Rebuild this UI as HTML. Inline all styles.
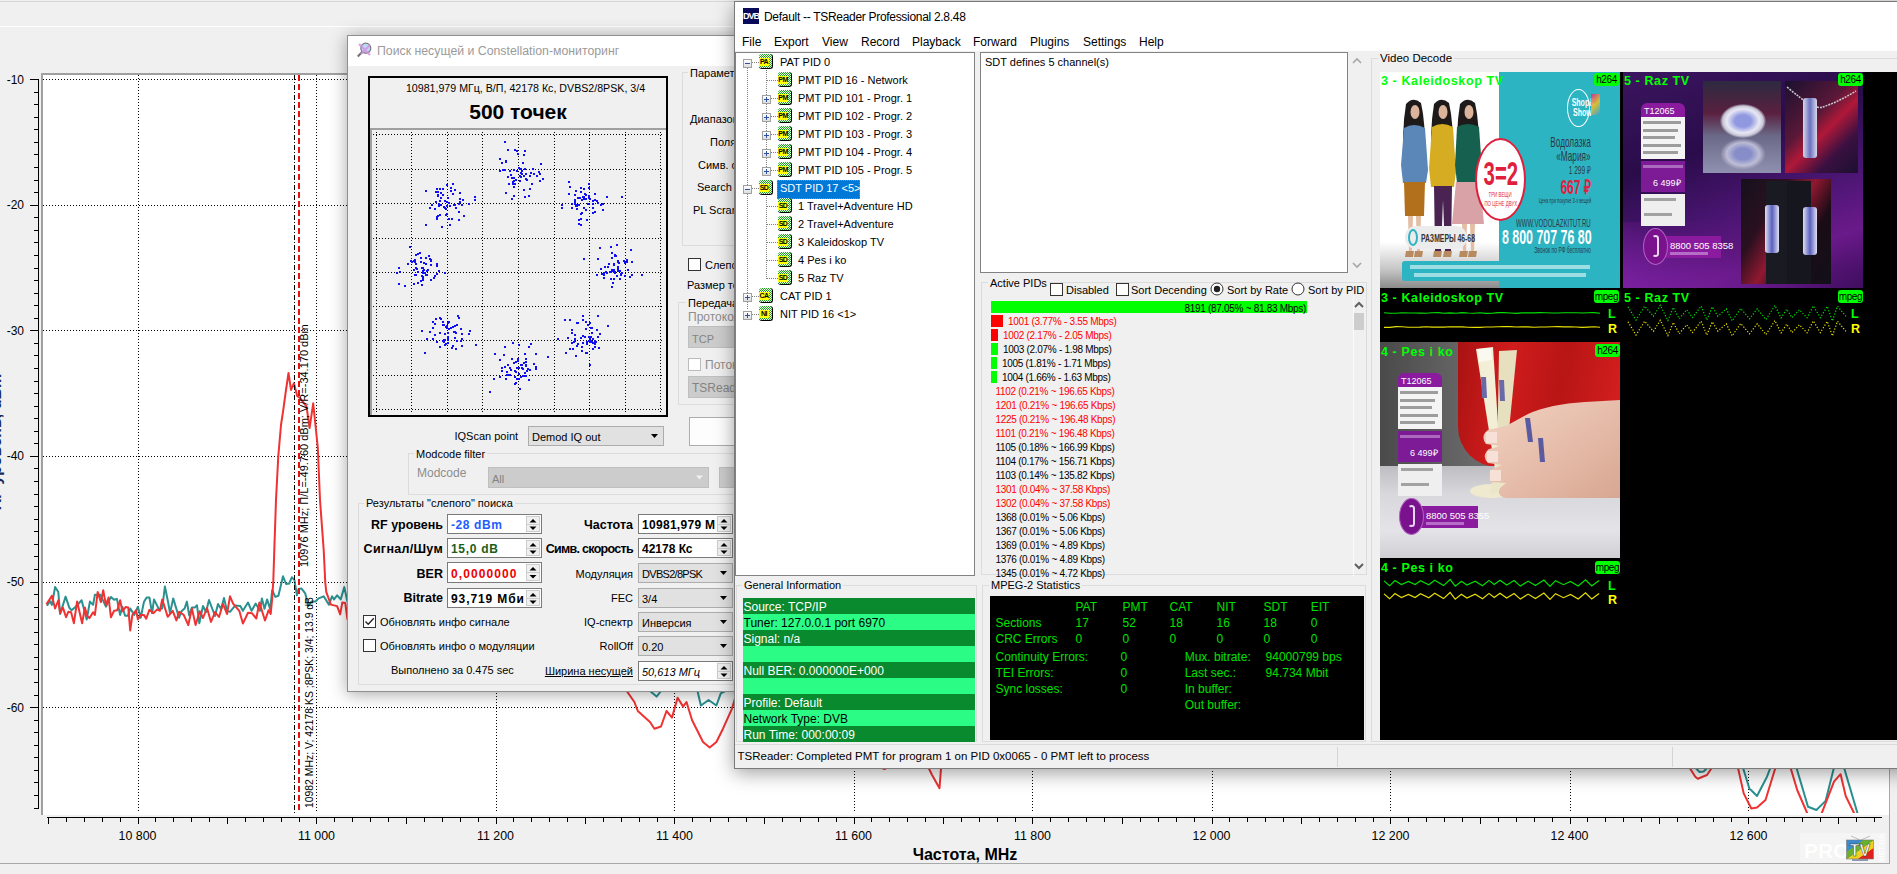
<!DOCTYPE html>
<html><head><meta charset="utf-8">
<style>
*{box-sizing:border-box}
html,body{margin:0;padding:0}
body{width:1897px;height:874px;overflow:hidden;position:relative;background:#f0f0f0;font-family:"Liberation Sans",sans-serif;font-size:12px;color:#000}
.a{position:absolute}

</style></head><body>
<svg width="1897" height="874" style="position:absolute;left:0;top:0">
<rect x="0" y="1" width="1897" height="1" fill="#d6d6d6"/>
<rect x="0" y="26" width="1897" height="1" fill="#ffffff"/>
<rect x="0" y="863" width="1890" height="1" fill="#a9a9a9"/>
<rect x="1889" y="26" width="1" height="838" fill="#a9a9a9"/>
<rect x="41" y="73" width="1848" height="742" fill="#ffffff"/>
<rect x="41" y="73" width="1848" height="2" fill="#a0a0a0"/>
<rect x="41" y="73" width="2" height="742" fill="#a0a0a0"/>
<line x1="43" y1="79.5" x2="1888" y2="79.5" stroke="#000" stroke-width="1" stroke-dasharray="1,2"/>
<line x1="43" y1="205.5" x2="1888" y2="205.5" stroke="#000" stroke-width="1" stroke-dasharray="1,2"/>
<line x1="43" y1="330.5" x2="1888" y2="330.5" stroke="#000" stroke-width="1" stroke-dasharray="1,2"/>
<line x1="43" y1="456.5" x2="1888" y2="456.5" stroke="#000" stroke-width="1" stroke-dasharray="1,2"/>
<line x1="43" y1="582.5" x2="1888" y2="582.5" stroke="#000" stroke-width="1" stroke-dasharray="1,2"/>
<line x1="43" y1="707.5" x2="1888" y2="707.5" stroke="#000" stroke-width="1" stroke-dasharray="1,2"/>
<line x1="138.5" y1="75" x2="138.5" y2="813" stroke="#000" stroke-width="1" stroke-dasharray="1,2"/>
<line x1="316.5" y1="75" x2="316.5" y2="813" stroke="#000" stroke-width="1" stroke-dasharray="1,2"/>
<line x1="496.5" y1="75" x2="496.5" y2="813" stroke="#000" stroke-width="1" stroke-dasharray="1,2"/>
<line x1="674.5" y1="75" x2="674.5" y2="813" stroke="#000" stroke-width="1" stroke-dasharray="1,2"/>
<line x1="854.5" y1="75" x2="854.5" y2="813" stroke="#000" stroke-width="1" stroke-dasharray="1,2"/>
<line x1="1032.5" y1="75" x2="1032.5" y2="813" stroke="#000" stroke-width="1" stroke-dasharray="1,2"/>
<line x1="1212.5" y1="75" x2="1212.5" y2="813" stroke="#000" stroke-width="1" stroke-dasharray="1,2"/>
<line x1="1390.5" y1="75" x2="1390.5" y2="813" stroke="#000" stroke-width="1" stroke-dasharray="1,2"/>
<line x1="1570.5" y1="75" x2="1570.5" y2="813" stroke="#000" stroke-width="1" stroke-dasharray="1,2"/>
<line x1="1748.5" y1="75" x2="1748.5" y2="813" stroke="#000" stroke-width="1" stroke-dasharray="1,2"/>
<rect x="38" y="79" width="1" height="730" fill="#000"/>
<rect x="30" y="79" width="8" height="1" fill="#000"/>
<rect x="34" y="92" width="4" height="1" fill="#000"/>
<rect x="34" y="104" width="4" height="1" fill="#000"/>
<rect x="34" y="117" width="4" height="1" fill="#000"/>
<rect x="34" y="129" width="4" height="1" fill="#000"/>
<rect x="34" y="142" width="4" height="1" fill="#000"/>
<rect x="34" y="154" width="4" height="1" fill="#000"/>
<rect x="34" y="167" width="4" height="1" fill="#000"/>
<rect x="34" y="180" width="4" height="1" fill="#000"/>
<rect x="34" y="192" width="4" height="1" fill="#000"/>
<rect x="30" y="205" width="8" height="1" fill="#000"/>
<rect x="34" y="217" width="4" height="1" fill="#000"/>
<rect x="34" y="230" width="4" height="1" fill="#000"/>
<rect x="34" y="242" width="4" height="1" fill="#000"/>
<rect x="34" y="255" width="4" height="1" fill="#000"/>
<rect x="34" y="268" width="4" height="1" fill="#000"/>
<rect x="34" y="280" width="4" height="1" fill="#000"/>
<rect x="34" y="293" width="4" height="1" fill="#000"/>
<rect x="34" y="305" width="4" height="1" fill="#000"/>
<rect x="34" y="318" width="4" height="1" fill="#000"/>
<rect x="30" y="330" width="8" height="1" fill="#000"/>
<rect x="34" y="343" width="4" height="1" fill="#000"/>
<rect x="34" y="355" width="4" height="1" fill="#000"/>
<rect x="34" y="368" width="4" height="1" fill="#000"/>
<rect x="34" y="381" width="4" height="1" fill="#000"/>
<rect x="34" y="393" width="4" height="1" fill="#000"/>
<rect x="34" y="406" width="4" height="1" fill="#000"/>
<rect x="34" y="418" width="4" height="1" fill="#000"/>
<rect x="34" y="431" width="4" height="1" fill="#000"/>
<rect x="34" y="443" width="4" height="1" fill="#000"/>
<rect x="30" y="456" width="8" height="1" fill="#000"/>
<rect x="34" y="468" width="4" height="1" fill="#000"/>
<rect x="34" y="481" width="4" height="1" fill="#000"/>
<rect x="34" y="494" width="4" height="1" fill="#000"/>
<rect x="34" y="506" width="4" height="1" fill="#000"/>
<rect x="34" y="519" width="4" height="1" fill="#000"/>
<rect x="34" y="531" width="4" height="1" fill="#000"/>
<rect x="34" y="544" width="4" height="1" fill="#000"/>
<rect x="34" y="556" width="4" height="1" fill="#000"/>
<rect x="34" y="569" width="4" height="1" fill="#000"/>
<rect x="30" y="582" width="8" height="1" fill="#000"/>
<rect x="34" y="594" width="4" height="1" fill="#000"/>
<rect x="34" y="607" width="4" height="1" fill="#000"/>
<rect x="34" y="619" width="4" height="1" fill="#000"/>
<rect x="34" y="632" width="4" height="1" fill="#000"/>
<rect x="34" y="644" width="4" height="1" fill="#000"/>
<rect x="34" y="657" width="4" height="1" fill="#000"/>
<rect x="34" y="669" width="4" height="1" fill="#000"/>
<rect x="34" y="682" width="4" height="1" fill="#000"/>
<rect x="34" y="695" width="4" height="1" fill="#000"/>
<rect x="30" y="707" width="8" height="1" fill="#000"/>
<rect x="34" y="720" width="4" height="1" fill="#000"/>
<rect x="34" y="732" width="4" height="1" fill="#000"/>
<rect x="34" y="745" width="4" height="1" fill="#000"/>
<rect x="34" y="757" width="4" height="1" fill="#000"/>
<rect x="34" y="770" width="4" height="1" fill="#000"/>
<rect x="34" y="782" width="4" height="1" fill="#000"/>
<rect x="34" y="795" width="4" height="1" fill="#000"/>
<rect x="34" y="808" width="4" height="1" fill="#000"/>
<text x="24" y="83.6" text-anchor="end" font-family="Liberation Sans" font-size="12" fill="#000">-10</text>
<text x="24" y="209.2" text-anchor="end" font-family="Liberation Sans" font-size="12" fill="#000">-20</text>
<text x="24" y="334.8" text-anchor="end" font-family="Liberation Sans" font-size="12" fill="#000">-30</text>
<text x="24" y="460.4" text-anchor="end" font-family="Liberation Sans" font-size="12" fill="#000">-40</text>
<text x="24" y="586.0" text-anchor="end" font-family="Liberation Sans" font-size="12" fill="#000">-50</text>
<text x="24" y="711.6" text-anchor="end" font-family="Liberation Sans" font-size="12" fill="#000">-60</text>
<rect x="47" y="817" width="1835" height="1" fill="#000"/>
<rect x="48" y="817" width="1" height="7" fill="#000"/>
<rect x="66" y="817" width="1" height="5" fill="#000"/>
<rect x="84" y="817" width="1" height="5" fill="#000"/>
<rect x="102" y="817" width="1" height="5" fill="#000"/>
<rect x="120" y="817" width="1" height="5" fill="#000"/>
<rect x="138" y="817" width="1" height="7" fill="#000"/>
<rect x="155" y="817" width="1" height="5" fill="#000"/>
<rect x="173" y="817" width="1" height="5" fill="#000"/>
<rect x="191" y="817" width="1" height="5" fill="#000"/>
<rect x="209" y="817" width="1" height="5" fill="#000"/>
<rect x="227" y="817" width="1" height="7" fill="#000"/>
<rect x="245" y="817" width="1" height="5" fill="#000"/>
<rect x="263" y="817" width="1" height="5" fill="#000"/>
<rect x="281" y="817" width="1" height="5" fill="#000"/>
<rect x="299" y="817" width="1" height="5" fill="#000"/>
<rect x="316" y="817" width="1" height="7" fill="#000"/>
<rect x="334" y="817" width="1" height="5" fill="#000"/>
<rect x="352" y="817" width="1" height="5" fill="#000"/>
<rect x="370" y="817" width="1" height="5" fill="#000"/>
<rect x="388" y="817" width="1" height="5" fill="#000"/>
<rect x="406" y="817" width="1" height="7" fill="#000"/>
<rect x="424" y="817" width="1" height="5" fill="#000"/>
<rect x="442" y="817" width="1" height="5" fill="#000"/>
<rect x="460" y="817" width="1" height="5" fill="#000"/>
<rect x="478" y="817" width="1" height="5" fill="#000"/>
<rect x="496" y="817" width="1" height="7" fill="#000"/>
<rect x="513" y="817" width="1" height="5" fill="#000"/>
<rect x="531" y="817" width="1" height="5" fill="#000"/>
<rect x="549" y="817" width="1" height="5" fill="#000"/>
<rect x="567" y="817" width="1" height="5" fill="#000"/>
<rect x="585" y="817" width="1" height="7" fill="#000"/>
<rect x="603" y="817" width="1" height="5" fill="#000"/>
<rect x="621" y="817" width="1" height="5" fill="#000"/>
<rect x="639" y="817" width="1" height="5" fill="#000"/>
<rect x="657" y="817" width="1" height="5" fill="#000"/>
<rect x="674" y="817" width="1" height="7" fill="#000"/>
<rect x="692" y="817" width="1" height="5" fill="#000"/>
<rect x="710" y="817" width="1" height="5" fill="#000"/>
<rect x="728" y="817" width="1" height="5" fill="#000"/>
<rect x="746" y="817" width="1" height="5" fill="#000"/>
<rect x="764" y="817" width="1" height="7" fill="#000"/>
<rect x="782" y="817" width="1" height="5" fill="#000"/>
<rect x="800" y="817" width="1" height="5" fill="#000"/>
<rect x="818" y="817" width="1" height="5" fill="#000"/>
<rect x="836" y="817" width="1" height="5" fill="#000"/>
<rect x="854" y="817" width="1" height="7" fill="#000"/>
<rect x="871" y="817" width="1" height="5" fill="#000"/>
<rect x="889" y="817" width="1" height="5" fill="#000"/>
<rect x="907" y="817" width="1" height="5" fill="#000"/>
<rect x="925" y="817" width="1" height="5" fill="#000"/>
<rect x="943" y="817" width="1" height="7" fill="#000"/>
<rect x="961" y="817" width="1" height="5" fill="#000"/>
<rect x="979" y="817" width="1" height="5" fill="#000"/>
<rect x="997" y="817" width="1" height="5" fill="#000"/>
<rect x="1015" y="817" width="1" height="5" fill="#000"/>
<rect x="1032" y="817" width="1" height="7" fill="#000"/>
<rect x="1050" y="817" width="1" height="5" fill="#000"/>
<rect x="1068" y="817" width="1" height="5" fill="#000"/>
<rect x="1086" y="817" width="1" height="5" fill="#000"/>
<rect x="1104" y="817" width="1" height="5" fill="#000"/>
<rect x="1122" y="817" width="1" height="7" fill="#000"/>
<rect x="1140" y="817" width="1" height="5" fill="#000"/>
<rect x="1158" y="817" width="1" height="5" fill="#000"/>
<rect x="1176" y="817" width="1" height="5" fill="#000"/>
<rect x="1194" y="817" width="1" height="5" fill="#000"/>
<rect x="1212" y="817" width="1" height="7" fill="#000"/>
<rect x="1229" y="817" width="1" height="5" fill="#000"/>
<rect x="1247" y="817" width="1" height="5" fill="#000"/>
<rect x="1265" y="817" width="1" height="5" fill="#000"/>
<rect x="1283" y="817" width="1" height="5" fill="#000"/>
<rect x="1301" y="817" width="1" height="7" fill="#000"/>
<rect x="1319" y="817" width="1" height="5" fill="#000"/>
<rect x="1337" y="817" width="1" height="5" fill="#000"/>
<rect x="1355" y="817" width="1" height="5" fill="#000"/>
<rect x="1373" y="817" width="1" height="5" fill="#000"/>
<rect x="1390" y="817" width="1" height="7" fill="#000"/>
<rect x="1408" y="817" width="1" height="5" fill="#000"/>
<rect x="1426" y="817" width="1" height="5" fill="#000"/>
<rect x="1444" y="817" width="1" height="5" fill="#000"/>
<rect x="1462" y="817" width="1" height="5" fill="#000"/>
<rect x="1480" y="817" width="1" height="7" fill="#000"/>
<rect x="1498" y="817" width="1" height="5" fill="#000"/>
<rect x="1516" y="817" width="1" height="5" fill="#000"/>
<rect x="1534" y="817" width="1" height="5" fill="#000"/>
<rect x="1552" y="817" width="1" height="5" fill="#000"/>
<rect x="1570" y="817" width="1" height="7" fill="#000"/>
<rect x="1587" y="817" width="1" height="5" fill="#000"/>
<rect x="1605" y="817" width="1" height="5" fill="#000"/>
<rect x="1623" y="817" width="1" height="5" fill="#000"/>
<rect x="1641" y="817" width="1" height="5" fill="#000"/>
<rect x="1659" y="817" width="1" height="7" fill="#000"/>
<rect x="1677" y="817" width="1" height="5" fill="#000"/>
<rect x="1695" y="817" width="1" height="5" fill="#000"/>
<rect x="1713" y="817" width="1" height="5" fill="#000"/>
<rect x="1731" y="817" width="1" height="5" fill="#000"/>
<rect x="1748" y="817" width="1" height="7" fill="#000"/>
<rect x="1766" y="817" width="1" height="5" fill="#000"/>
<rect x="1784" y="817" width="1" height="5" fill="#000"/>
<rect x="1802" y="817" width="1" height="5" fill="#000"/>
<rect x="1820" y="817" width="1" height="5" fill="#000"/>
<rect x="1838" y="817" width="1" height="7" fill="#000"/>
<rect x="1856" y="817" width="1" height="5" fill="#000"/>
<rect x="1874" y="817" width="1" height="5" fill="#000"/>
<text x="137.5" y="840" text-anchor="middle" font-family="Liberation Sans" font-size="12.4" fill="#000">10 800</text>
<text x="316.5" y="840" text-anchor="middle" font-family="Liberation Sans" font-size="12.4" fill="#000">11 000</text>
<text x="495.5" y="840" text-anchor="middle" font-family="Liberation Sans" font-size="12.4" fill="#000">11 200</text>
<text x="674.5" y="840" text-anchor="middle" font-family="Liberation Sans" font-size="12.4" fill="#000">11 400</text>
<text x="853.5" y="840" text-anchor="middle" font-family="Liberation Sans" font-size="12.4" fill="#000">11 600</text>
<text x="1032.5" y="840" text-anchor="middle" font-family="Liberation Sans" font-size="12.4" fill="#000">11 800</text>
<text x="1211.5" y="840" text-anchor="middle" font-family="Liberation Sans" font-size="12.4" fill="#000">12 000</text>
<text x="1390.5" y="840" text-anchor="middle" font-family="Liberation Sans" font-size="12.4" fill="#000">12 200</text>
<text x="1569.5" y="840" text-anchor="middle" font-family="Liberation Sans" font-size="12.4" fill="#000">12 400</text>
<text x="1748.5" y="840" text-anchor="middle" font-family="Liberation Sans" font-size="12.4" fill="#000">12 600</text>
<text x="965" y="860" text-anchor="middle" font-family="Liberation Sans" font-weight="bold" font-size="16" fill="#000">Частота, MHz</text>
<text transform="translate(1,442) rotate(-90)" text-anchor="middle" font-family="Liberation Sans" font-weight="bold" font-size="16" fill="#1a2a5a">RF уровень, dBm</text>
<g clip-path="url(#pc)">
<clipPath id="pc"><rect x="43" y="75" width="1845" height="738"/></clipPath>
<polyline points="46.9,605.8 50.0,601.2 51.9,604.9 55.1,587.0 58.3,592.0 60.1,614.0 65.6,596.6 69.3,607.6 71.6,610.3 75.7,606.7 81.6,600.3 86.7,619.5 89.9,601.6 93.1,604.9 94.9,594.8 100.4,594.8 105.9,606.7 110.9,597.0 114.1,599.8 116.9,598.9 120.1,614.9 122.4,606.7 125.1,615.8 127.9,615.8 130.2,608.5 134.3,614.9 137.9,606.7 140.7,617.7 143.9,602.1 146.6,597.5 149.4,597.5 152.1,613.1 154.0,599.4 159.0,609.4 162.2,608.5 164.9,586.5 168.1,602.1 170.0,613.1 173.2,598.4 179.1,617.7 181.4,611.3 184.6,608.5 186.9,601.6 189.2,615.4 191.9,607.6 194.7,607.6 197.0,605.3 199.3,623.2 203.0,606.0 206.0,612.0 209.0,600.0 212.0,608.0 215.0,616.0 218.0,604.0 221.0,609.0 224.0,598.0 227.0,611.0 230.0,611.8 235.1,605.6 240.3,606.0 242.9,610.8 248.0,602.5 251.6,610.8 255.7,603.6 259.9,610.8 261.9,598.4 264.5,608.7 267.1,599.4 270.2,609.2 272.2,590.2 275.3,596.9 278.4,595.8 283.0,576.3 286.1,584.0 289.2,583.5 291.8,577.3 294.4,579.9 296.9,595.3 298.5,589.1 301.6,588.6 305.2,593.3 308.3,606.1 311.4,601.5 315.5,601.5 318.6,598.4 323.7,596.3 328.9,604.6 332.0,596.3 334.0,599.4 337.1,595.3 340.7,599.4 344.3,587.1 347.4,601.5 352.0,598.0" fill="none" stroke="#2a9090" stroke-width="2" stroke-linejoin="round"/>
<polyline points="46.4,604.4 51.9,595.7 55.1,608.5 58.3,600.3 60.1,613.1 62.9,607.6 66.1,617.2 68.4,611.7 71.1,612.2 73.9,623.2 77.1,601.6 82.1,623.2 84.9,607.6 87.1,615.8 89.4,618.1 93.1,612.2 94.9,614.9 97.7,592.0 100.9,602.1 103.2,590.2 105.9,604.9 108.6,597.5 110.9,617.2 114.1,610.8 117.3,610.3 120.1,600.3 122.4,611.3 125.6,607.1 128.3,607.6 130.2,630.5 132.4,614.9 136.1,610.3 137.9,619.5 140.7,614.9 143.9,614.9 146.2,618.6 149.4,609.9 153.5,613.1 157.2,609.4 159.9,610.8 162.2,599.4 167.7,616.8 172.7,610.8 176.4,620.4 179.1,611.7 183.7,614.9 188.3,625.0 191.9,608.5 195.6,625.0 199.7,611.3 203.0,618.0 207.0,608.0 211.0,622.0 215.0,612.0 219.0,617.0 223.0,604.0 227.0,614.0 230.0,596.3 233.1,603.6 239.3,610.8 242.9,623.6 248.0,612.8 252.1,613.3 256.3,618.5 259.4,602.5 265.0,620.5 268.6,610.2 270.7,613.9 272.2,598.4 273.3,580.9 274.3,550.0 276.0,500.0 278.3,456.0 281.0,425.0 283.3,409.7 286.0,390.0 288.5,373.0 291.0,389.9 293.9,383.2 297.2,396.0 300.0,398.0 303.0,402.0 306.5,406.3 309.6,428.0 313.2,403.3 317.8,447.5 320.0,500.0 323.7,550.0 325.3,583.0 326.3,592.2 330.9,604.6 337.1,606.1 340.2,614.4 342.3,602.5 345.3,603.0 347.4,619.0 352.0,612.0" fill="none" stroke="#f03232" stroke-width="2" stroke-linejoin="round"/>
<polyline points="640.0,670.0 650.0,691.0 656.6,696.6 661.0,691.0 668.0,675.0 690.0,675.0 697.5,691.0 700.9,705.5 708.6,700.0 716.4,705.5 720.8,693.3 725.2,691.0 735.0,675.0" fill="none" stroke="#2a9090" stroke-width="2" stroke-linejoin="round"/>
<polyline points="615.0,670.0 626.7,691.0 634.4,702.0 637.8,711.0 650.0,722.0 654.4,728.7 661.0,726.5 666.5,711.0 672.0,717.6 677.6,697.7 683.1,706.6 686.5,702.0 692.0,720.0 703.0,742.0 709.7,747.5 716.4,742.0 723.0,728.7 731.9,708.8 736.0,695.0 745.0,680.0" fill="none" stroke="#f03232" stroke-width="2" stroke-linejoin="round"/>
<polyline points="872.0,755.0 879.8,766.8 884.4,769.0 889.0,766.8 895.0,755.0" fill="none" stroke="#f03232" stroke-width="2" stroke-linejoin="round"/>
<polyline points="922.0,750.0 928.8,768.3 931.8,774.5 939.5,788.2 941.0,768.3 943.0,750.0" fill="none" stroke="#f03232" stroke-width="2" stroke-linejoin="round"/>
<polyline points="1690.0,755.0 1695.3,767.5 1699.5,772.0 1703.6,771.4 1707.8,767.5 1712.0,755.0" fill="none" stroke="#2a9090" stroke-width="2" stroke-linejoin="round"/>
<polyline points="1740.0,755.0 1742.9,767.5 1749.6,789.2 1751.0,790.0 1757.0,796.0 1767.0,776.7 1770.5,767.5 1773.0,755.0" fill="none" stroke="#2a9090" stroke-width="2" stroke-linejoin="round"/>
<polyline points="1793.0,755.0 1796.4,767.5 1808.0,806.8 1816.4,810.0 1825.6,800.9 1834.0,767.5 1836.0,755.0 1842.0,755.0 1844.0,767.5 1858.0,815.0" fill="none" stroke="#2a9090" stroke-width="2" stroke-linejoin="round"/>
<polyline points="1684.0,755.0 1689.4,767.5 1695.3,776.7 1697.8,778.7 1707.0,775.0 1712.0,767.5 1716.0,755.0" fill="none" stroke="#f03232" stroke-width="2" stroke-linejoin="round"/>
<polyline points="1735.0,755.0 1737.9,767.5 1743.7,793.4 1751.3,808.5 1757.0,807.6 1765.5,800.0 1775.5,767.5 1778.0,755.0" fill="none" stroke="#f03232" stroke-width="2" stroke-linejoin="round"/>
<polyline points="1787.0,755.0 1790.5,767.5 1797.2,790.0 1808.0,815.0 1821.0,815.0 1834.0,781.7 1840.6,774.2 1845.7,796.0 1855.0,815.0" fill="none" stroke="#f03232" stroke-width="2" stroke-linejoin="round"/>
</g>
<line x1="294.5" y1="75" x2="294.5" y2="813" stroke="#000" stroke-width="1" stroke-dasharray="5,2,1,2"/>
<line x1="299" y1="75" x2="299" y2="813" stroke="#e81010" stroke-width="2" stroke-dasharray="6,3"/>
<text transform="translate(313,808) rotate(-90)" font-family="Liberation Sans" font-size="10.4" fill="#000">10982 MHz; V; 42178 KS ;8PSK; 3/4; 13.9 dB</text>
<text transform="translate(308,567) rotate(-90)" font-family="Liberation Sans" font-size="11" fill="#000">10976 MHz;  П/L=-49.760 dBm;  V/R=-34.170 dBm</text>
<rect x="1800" y="833" width="86" height="30" fill="#f6f6f6" opacity="0.7"/>
<text x="1804" y="857.5" font-family="Liberation Sans" font-weight="bold" font-size="21" fill="#ffffff" opacity="0.95">PRO</text>
<line x1="1851" y1="836" x2="1860" y2="840" stroke="#999" stroke-width="0.6"/><line x1="1870" y1="836" x2="1861" y2="840" stroke="#999" stroke-width="0.6"/>
<defs><linearGradient id="tvg" x1="0" y1="0" x2="1" y2="1"><stop offset="0" stop-color="#3a8ad0"/><stop offset="0.3" stop-color="#3a8ad0"/><stop offset="0.32" stop-color="#6ab030"/><stop offset="0.5" stop-color="#6ab030"/><stop offset="0.52" stop-color="#f0d020"/><stop offset="0.7" stop-color="#f0d020"/><stop offset="0.72" stop-color="#e02020"/><stop offset="1" stop-color="#e02020"/></linearGradient></defs>
<rect x="1846.5" y="840" width="27" height="19" fill="url(#tvg)" stroke="#777" stroke-width="0.6"/>
<text x="1860" y="856" text-anchor="middle" font-family="Liberation Sans" font-weight="bold" font-size="16" fill="#fff" stroke="#333" stroke-width="0.5">TV</text>
<rect x="1852" y="859" width="16" height="2" fill="#8a9aaa"/>
<text transform="translate(1884,861) rotate(-90)" font-family="Liberation Sans" font-weight="bold" font-size="7.5" fill="#fff" opacity="0.9">НЕТ.UA</text>
</svg>
<div class="a" style="left:347px;top:35px;width:420px;height:657px;background:#f0f0f0;border:1px solid #8f8f8f;box-shadow:0 2px 16px rgba(0,0,0,0.35)"></div>
<div class="a" style="left:348px;top:36px;width:418px;height:30px;background:#fff"></div>
<svg class="a" style="left:356px;top:41px" width="18" height="18"><circle cx="9.8" cy="7.2" r="5" fill="#bcd8f4" stroke="#7a7a7a" stroke-width="1.2"/><path d="M6.4 10.6 L1.8 15.5" stroke="#707070" stroke-width="2"/><path d="M3 3 L14 14 M14 4 L5 13" stroke="#d58ee8" stroke-width="2.2" opacity="0.8"/></svg>
<div class="a" style="left:377px;top:43.99px;line-height:14px;font-size:12.3px;white-space:nowrap;color:#9b9b9b">Поиск несущей и Constellation-мониторинг</div>
<div class="a" style="left:368px;top:76px;width:300px;height:341px;border:2px solid #000;background:#f0f0f0"></div>
<div class="a" style="left:225.5px;width:600px;text-align:center;top:81.56px;line-height:12px;font-size:10.65px;white-space:nowrap;">10981,979 МГц, В/П, 42178 Кс, DVBS2/8PSK, 3/4</div>
<div class="a" style="left:218px;width:600px;text-align:center;top:99.97px;line-height:24px;font-size:21px;white-space:nowrap;font-weight:bold">500 точек</div>
<div class="a" style="left:370px;top:128px;width:296px;height:2px;background:#a0a0a0"></div>
<div class="a" style="left:370px;top:130px;width:2px;height:285px;background:#a0a0a0"></div>
<svg class="a" style="left:0;top:0" width="760" height="420">
<line x1="376.5" y1="132" x2="376.5" y2="412" stroke="#000" stroke-dasharray="1,2"/>
<line x1="411.5" y1="132" x2="411.5" y2="412" stroke="#000" stroke-dasharray="1,2"/>
<line x1="447.5" y1="132" x2="447.5" y2="412" stroke="#000" stroke-dasharray="1,2"/>
<line x1="482.5" y1="132" x2="482.5" y2="412" stroke="#000" stroke-dasharray="1,2"/>
<line x1="518.5" y1="132" x2="518.5" y2="412" stroke="#000" stroke-dasharray="1,2"/>
<line x1="554.5" y1="132" x2="554.5" y2="412" stroke="#000" stroke-dasharray="1,2"/>
<line x1="589.5" y1="132" x2="589.5" y2="412" stroke="#000" stroke-dasharray="1,2"/>
<line x1="625.5" y1="132" x2="625.5" y2="412" stroke="#000" stroke-dasharray="1,2"/>
<line x1="660.5" y1="132" x2="660.5" y2="412" stroke="#000" stroke-dasharray="1,2"/>
<line x1="373" y1="134.5" x2="664" y2="134.5" stroke="#000" stroke-dasharray="1,2"/>
<line x1="373" y1="169.5" x2="664" y2="169.5" stroke="#000" stroke-dasharray="1,2"/>
<line x1="373" y1="203.5" x2="664" y2="203.5" stroke="#000" stroke-dasharray="1,2"/>
<line x1="373" y1="238.5" x2="664" y2="238.5" stroke="#000" stroke-dasharray="1,2"/>
<line x1="373" y1="272.5" x2="664" y2="272.5" stroke="#000" stroke-dasharray="1,2"/>
<line x1="373" y1="306.5" x2="664" y2="306.5" stroke="#000" stroke-dasharray="1,2"/>
<line x1="373" y1="340.5" x2="664" y2="340.5" stroke="#000" stroke-dasharray="1,2"/>
<line x1="373" y1="375.5" x2="664" y2="375.5" stroke="#000" stroke-dasharray="1,2"/>
<line x1="373" y1="409.5" x2="664" y2="409.5" stroke="#000" stroke-dasharray="1,2"/>
<path d="M505 161h2v2h-2z M524 150h2v2h-2z M516 150h2v2h-2z M529 175h2v2h-2z M532 168h2v2h-2z M521 170h2v2h-2z M510 174h2v2h-2z M504 169h2v2h-2z M525 173h2v2h-2z M513 195h2v2h-2z M518 167h2v2h-2z M519 168h2v2h-2z M513 169h2v2h-2z M539 173h2v2h-2z M519 180h2v2h-2z M538 171h2v2h-2z M511 198h2v2h-2z M502 169h2v2h-2z M524 196h2v2h-2z M507 149h2v2h-2z M524 168h2v2h-2z M513 177h2v2h-2z M520 176h2v2h-2z M513 186h2v2h-2z M533 173h2v2h-2z M513 180h2v2h-2z M522 162h2v2h-2z M512 183h2v2h-2z M516 170h2v2h-2z M520 172h2v2h-2z M517 153h2v2h-2z M536 175h2v2h-2z M508 183h2v2h-2z M521 173h2v2h-2z M528 195h2v2h-2z M523 189h2v2h-2z M540 163h2v2h-2z M512 181h2v2h-2z M499 170h2v2h-2z M531 183h2v2h-2z M523 154h2v2h-2z M542 178h2v2h-2z M525 178h2v2h-2z M499 158h2v2h-2z M505 192h2v2h-2z M509 170h2v2h-2z M515 179h2v2h-2z M523 175h2v2h-2z M504 141h2v2h-2z M519 175h2v2h-2z M530 172h2v2h-2z M511 177h2v2h-2z M501 162h2v2h-2z M507 176h2v2h-2z M539 180h2v2h-2z M529 175h2v2h-2z M520 168h2v2h-2z M514 149h2v2h-2z M505 160h2v2h-2z M526 179h2v2h-2z M529 188h2v2h-2z M514 183h2v2h-2z M468 203h2v2h-2z M459 201h2v2h-2z M431 204h2v2h-2z M439 204h2v2h-2z M443 206h2v2h-2z M425 224h2v2h-2z M462 199h2v2h-2z M438 203h2v2h-2z M455 207h2v2h-2z M452 183h2v2h-2z M436 216h2v2h-2z M450 187h2v2h-2z M439 188h2v2h-2z M437 215h2v2h-2z M445 214h2v2h-2z M450 187h2v2h-2z M441 226h2v2h-2z M440 192h2v2h-2z M461 204h2v2h-2z M448 218h2v2h-2z M429 207h2v2h-2z M436 188h2v2h-2z M439 214h2v2h-2z M446 184h2v2h-2z M436 218h2v2h-2z M459 192h2v2h-2z M474 199h2v2h-2z M435 201h2v2h-2z M458 219h2v2h-2z M459 198h2v2h-2z M442 188h2v2h-2z M447 197h2v2h-2z M450 190h2v2h-2z M442 194h2v2h-2z M435 191h2v2h-2z M437 191h2v2h-2z M454 204h2v2h-2z M434 208h2v2h-2z M451 218h2v2h-2z M446 201h2v2h-2z M440 204h2v2h-2z M453 204h2v2h-2z M445 208h2v2h-2z M449 205h2v2h-2z M438 205h2v2h-2z M437 194h2v2h-2z M449 224h2v2h-2z M458 203h2v2h-2z M446 213h2v2h-2z M463 215h2v2h-2z M446 205h2v2h-2z M444 200h2v2h-2z M439 200h2v2h-2z M425 190h2v2h-2z M452 193h2v2h-2z M454 189h2v2h-2z M444 207h2v2h-2z M437 195h2v2h-2z M474 196h2v2h-2z M440 197h2v2h-2z M448 202h2v2h-2z M458 211h2v2h-2z M579 197h2v2h-2z M569 186h2v2h-2z M576 208h2v2h-2z M585 209h2v2h-2z M594 199h2v2h-2z M606 196h2v2h-2z M577 197h2v2h-2z M596 200h2v2h-2z M576 205h2v2h-2z M596 200h2v2h-2z M581 212h2v2h-2z M594 211h2v2h-2z M576 204h2v2h-2z M588 183h2v2h-2z M597 202h2v2h-2z M580 224h2v2h-2z M585 194h2v2h-2z M583 207h2v2h-2z M592 200h2v2h-2z M574 194h2v2h-2z M575 190h2v2h-2z M583 196h2v2h-2z M584 193h2v2h-2z M574 199h2v2h-2z M580 213h2v2h-2z M574 203h2v2h-2z M583 188h2v2h-2z M592 203h2v2h-2z M561 207h2v2h-2z M594 193h2v2h-2z M602 203h2v2h-2z M571 207h2v2h-2z M580 187h2v2h-2z M561 204h2v2h-2z M576 208h2v2h-2z M588 196h2v2h-2z M578 219h2v2h-2z M602 209h2v2h-2z M580 191h2v2h-2z M580 218h2v2h-2z M589 198h2v2h-2z M571 203h2v2h-2z M574 201h2v2h-2z M592 212h2v2h-2z M585 198h2v2h-2z M586 219h2v2h-2z M588 187h2v2h-2z M600 204h2v2h-2z M621 196h2v2h-2z M583 198h2v2h-2z M588 195h2v2h-2z M568 181h2v2h-2z M582 196h2v2h-2z M578 223h2v2h-2z M592 212h2v2h-2z M578 204h2v2h-2z M581 199h2v2h-2z M592 207h2v2h-2z M587 203h2v2h-2z M568 193h2v2h-2z M588 197h2v2h-2z M575 205h2v2h-2z M411 261h2v2h-2z M430 264h2v2h-2z M436 273h2v2h-2z M430 279h2v2h-2z M398 267h2v2h-2z M407 263h2v2h-2z M420 280h2v2h-2z M421 284h2v2h-2z M415 267h2v2h-2z M422 277h2v2h-2z M420 261h2v2h-2z M417 253h2v2h-2z M434 275h2v2h-2z M426 270h2v2h-2z M415 263h2v2h-2z M430 259h2v2h-2z M413 283h2v2h-2z M438 270h2v2h-2z M427 269h2v2h-2z M436 263h2v2h-2z M422 272h2v2h-2z M436 265h2v2h-2z M423 262h2v2h-2z M414 261h2v2h-2z M422 276h2v2h-2z M414 261h2v2h-2z M417 271h2v2h-2z M428 255h2v2h-2z M425 257h2v2h-2z M429 258h2v2h-2z M410 260h2v2h-2z M420 257h2v2h-2z M423 269h2v2h-2z M422 270h2v2h-2z M430 260h2v2h-2z M421 267h2v2h-2z M399 271h2v2h-2z M413 260h2v2h-2z M416 268h2v2h-2z M424 272h2v2h-2z M414 274h2v2h-2z M425 263h2v2h-2z M421 275h2v2h-2z M426 274h2v2h-2z M422 279h2v2h-2z M444 272h2v2h-2z M404 285h2v2h-2z M415 254h2v2h-2z M396 272h2v2h-2z M433 277h2v2h-2z M417 282h2v2h-2z M420 261h2v2h-2z M422 270h2v2h-2z M422 271h2v2h-2z M398 283h2v2h-2z M415 274h2v2h-2z M413 269h2v2h-2z M419 252h2v2h-2z M425 274h2v2h-2z M409 246h2v2h-2z M414 259h2v2h-2z M422 267h2v2h-2z M631 274h2v2h-2z M611 269h2v2h-2z M583 258h2v2h-2z M604 266h2v2h-2z M617 270h2v2h-2z M623 260h2v2h-2z M617 266h2v2h-2z M614 271h2v2h-2z M611 270h2v2h-2z M613 278h2v2h-2z M612 270h2v2h-2z M641 274h2v2h-2z M619 278h2v2h-2z M603 274h2v2h-2z M621 272h2v2h-2z M624 275h2v2h-2z M626 261h2v2h-2z M618 262h2v2h-2z M627 269h2v2h-2z M600 268h2v2h-2z M603 277h2v2h-2z M610 246h2v2h-2z M610 278h2v2h-2z M617 261h2v2h-2z M620 273h2v2h-2z M629 276h2v2h-2z M617 260h2v2h-2z M617 270h2v2h-2z M614 272h2v2h-2z M601 273h2v2h-2z M614 271h2v2h-2z M613 264h2v2h-2z M616 275h2v2h-2z M610 271h2v2h-2z M606 272h2v2h-2z M614 255h2v2h-2z M626 259h2v2h-2z M614 254h2v2h-2z M596 274h2v2h-2z M599 247h2v2h-2z M611 252h2v2h-2z M611 286h2v2h-2z M609 271h2v2h-2z M619 270h2v2h-2z M612 282h2v2h-2z M613 271h2v2h-2z M615 255h2v2h-2z M617 268h2v2h-2z M620 274h2v2h-2z M630 249h2v2h-2z M608 263h2v2h-2z M605 271h2v2h-2z M613 269h2v2h-2z M597 258h2v2h-2z M613 263h2v2h-2z M607 266h2v2h-2z M611 257h2v2h-2z M631 261h2v2h-2z M620 273h2v2h-2z M624 262h2v2h-2z M603 272h2v2h-2z M616 244h2v2h-2z M421 330h2v2h-2z M444 333h2v2h-2z M452 326h2v2h-2z M475 344h2v2h-2z M461 338h2v2h-2z M426 338h2v2h-2z M442 340h2v2h-2z M447 342h2v2h-2z M439 332h2v2h-2z M448 328h2v2h-2z M443 341h2v2h-2z M468 333h2v2h-2z M456 324h2v2h-2z M443 339h2v2h-2z M454 325h2v2h-2z M454 337h2v2h-2z M461 345h2v2h-2z M453 331h2v2h-2z M450 327h2v2h-2z M439 317h2v2h-2z M434 323h2v2h-2z M447 336h2v2h-2z M434 334h2v2h-2z M452 345h2v2h-2z M447 338h2v2h-2z M444 344h2v2h-2z M432 338h2v2h-2z M424 352h2v2h-2z M457 315h2v2h-2z M442 321h2v2h-2z M429 331h2v2h-2z M439 346h2v2h-2z M442 324h2v2h-2z M447 339h2v2h-2z M456 340h2v2h-2z M432 327h2v2h-2z M446 327h2v2h-2z M455 332h2v2h-2z M447 332h2v2h-2z M448 321h2v2h-2z M469 330h2v2h-2z M440 318h2v2h-2z M447 322h2v2h-2z M451 347h2v2h-2z M454 331h2v2h-2z M461 333h2v2h-2z M447 336h2v2h-2z M443 339h2v2h-2z M435 318h2v2h-2z M460 328h2v2h-2z M444 339h2v2h-2z M443 324h2v2h-2z M445 326h2v2h-2z M453 331h2v2h-2z M445 343h2v2h-2z M432 321h2v2h-2z M455 348h2v2h-2z M448 328h2v2h-2z M460 340h2v2h-2z M458 317h2v2h-2z M446 325h2v2h-2z M436 341h2v2h-2z M591 332h2v2h-2z M581 350h2v2h-2z M590 336h2v2h-2z M589 338h2v2h-2z M571 332h2v2h-2z M586 343h2v2h-2z M571 329h2v2h-2z M577 322h2v2h-2z M595 341h2v2h-2z M597 315h2v2h-2z M575 355h2v2h-2z M569 319h2v2h-2z M586 352h2v2h-2z M590 327h2v2h-2z M589 341h2v2h-2z M586 341h2v2h-2z M592 348h2v2h-2z M598 347h2v2h-2z M582 319h2v2h-2z M589 322h2v2h-2z M607 325h2v2h-2z M564 319h2v2h-2z M588 340h2v2h-2z M590 340h2v2h-2z M576 345h2v2h-2z M576 322h2v2h-2z M593 342h2v2h-2z M574 334h2v2h-2z M594 346h2v2h-2z M572 348h2v2h-2z M557 338h2v2h-2z M588 336h2v2h-2z M585 321h2v2h-2z M582 342h2v2h-2z M574 338h2v2h-2z M582 315h2v2h-2z M577 343h2v2h-2z M567 337h2v2h-2z M587 324h2v2h-2z M581 346h2v2h-2z M591 327h2v2h-2z M594 340h2v2h-2z M585 352h2v2h-2z M591 341h2v2h-2z M594 343h2v2h-2z M597 336h2v2h-2z M565 352h2v2h-2z M592 342h2v2h-2z M584 336h2v2h-2z M585 328h2v2h-2z M592 338h2v2h-2z M574 340h2v2h-2z M580 337h2v2h-2z M589 364h2v2h-2z M573 341h2v2h-2z M591 341h2v2h-2z M599 333h2v2h-2z M580 337h2v2h-2z M569 348h2v2h-2z M571 342h2v2h-2z M596 329h2v2h-2z M582 335h2v2h-2z M535 368h2v2h-2z M499 376h2v2h-2z M528 346h2v2h-2z M489 391h2v2h-2z M518 344h2v2h-2z M528 379h2v2h-2z M493 378h2v2h-2z M525 365h2v2h-2z M510 369h2v2h-2z M509 367h2v2h-2z M515 361h2v2h-2z M523 375h2v2h-2z M526 370h2v2h-2z M535 353h2v2h-2z M518 367h2v2h-2z M530 343h2v2h-2z M513 362h2v2h-2z M519 388h2v2h-2z M520 364h2v2h-2z M522 375h2v2h-2z M515 382h2v2h-2z M505 378h2v2h-2z M525 375h2v2h-2z M533 363h2v2h-2z M522 368h2v2h-2z M511 358h2v2h-2z M509 374h2v2h-2z M494 353h2v2h-2z M518 378h2v2h-2z M516 378h2v2h-2z M517 360h2v2h-2z M501 367h2v2h-2z M535 366h2v2h-2z M506 371h2v2h-2z M503 354h2v2h-2z M529 369h2v2h-2z M527 368h2v2h-2z M516 367h2v2h-2z M514 376h2v2h-2z M504 346h2v2h-2z M508 374h2v2h-2z M512 342h2v2h-2z M547 356h2v2h-2z M515 371h2v2h-2z M521 364h2v2h-2z M501 370h2v2h-2z M507 364h2v2h-2z M525 361h2v2h-2z M499 359h2v2h-2z M524 372h2v2h-2z M504 366h2v2h-2z M520 376h2v2h-2z M521 367h2v2h-2z M514 370h2v2h-2z M525 364h2v2h-2z M514 383h2v2h-2z M517 358h2v2h-2z M524 353h2v2h-2z M506 374h2v2h-2z M518 373h2v2h-2z M525 358h2v2h-2z M523 362h2v2h-2z" fill="#1010f0"/>
</svg>
<div class="a" style="left:682px;top:72px;width:80px;height:174px;border:1px solid #dcdcdc"></div><div class="a" style="left:688px;top:66.94px;line-height:13px;font-size:11px;white-space:nowrap;color:#000"><span style="background:#f0f0f0;padding:0 2px">Параметр</span></div>
<div class="a" style="left:690px;top:112.94px;line-height:13px;font-size:11px;white-space:nowrap;">Диапазон</div>
<div class="a" style="left:710px;top:135.94px;line-height:13px;font-size:11px;white-space:nowrap;">Поля</div>
<div class="a" style="left:698px;top:158.94px;line-height:13px;font-size:11px;white-space:nowrap;">Симв. с</div>
<div class="a" style="left:697px;top:181.44px;line-height:13px;font-size:11px;white-space:nowrap;">Search s</div>
<div class="a" style="left:693px;top:204.44px;line-height:13px;font-size:11px;white-space:nowrap;">PL Scram</div>
<div class="a" style="left:688px;top:258px;width:13px;height:13px;background:#fff;border:1px solid #333"></div>
<div class="a" style="left:705px;top:258.94px;line-height:13px;font-size:11px;white-space:nowrap;">Слепо</div>
<div class="a" style="left:687px;top:278.94px;line-height:13px;font-size:11px;white-space:nowrap;">Размер то</div>
<div class="a" style="left:678px;top:302px;width:80px;height:103px;border:1px solid #dcdcdc"></div><div class="a" style="left:686px;top:296.94px;line-height:13px;font-size:11px;white-space:nowrap;color:#000"><span style="background:#f0f0f0;padding:0 2px">Передача</span></div>
<div class="a" style="left:688px;top:310.09px;line-height:14px;font-size:12px;white-space:nowrap;color:#8d8d8d">Протокол</div>
<div class="a" style="left:688px;top:326px;width:60px;height:22px;background:#cccccc;border:1px solid #bfbfbf"></div>
<div class="a" style="left:692px;top:332.94px;line-height:13px;font-size:11px;white-space:nowrap;color:#838383">TCP</div>
<svg class="a" style="left:733px;top:326px" width="12" height="22"><path d="M2 9.0 L9 9.0 L5.5 13.0Z" fill="#f0f0f0"/></svg>
<div class="a" style="left:688px;top:358px;width:13px;height:13px;background:#fff;border:1px solid #bcbcbc"></div>
<div class="a" style="left:705px;top:358.09px;line-height:14px;font-size:12px;white-space:nowrap;color:#8d8d8d">Поток</div>
<div class="a" style="left:688px;top:376px;width:60px;height:22px;background:#cccccc;border:1px solid #bfbfbf"></div>
<div class="a" style="left:692px;top:381.09px;line-height:14px;font-size:12px;white-space:nowrap;color:#838383">TSReade</div>
<div class="a" style="left:689px;top:417px;width:60px;height:29px;background:#fdfdfd;border:1px solid #adadad"></div>
<div class="a" style="left:454.5px;top:429.94px;line-height:13px;font-size:11px;white-space:nowrap;">IQScan point</div>
<div class="a" style="left:528px;top:426px;width:136px;height:20px;background:#e1e1e1;border:1px solid #adadad"></div>
<div class="a" style="left:532px;top:430.94px;line-height:13px;font-size:11px;white-space:nowrap;color:#000">Demod IQ out</div>
<svg class="a" style="left:649px;top:426px" width="12" height="20"><path d="M2 8.0 L9 8.0 L5.5 12.0Z" fill="#000"/></svg>
<div class="a" style="left:408px;top:453px;width:340px;height:42px;border:1px solid #dcdcdc"></div><div class="a" style="left:414px;top:447.94px;line-height:13px;font-size:11px;white-space:nowrap;color:#000"><span style="background:#f0f0f0;padding:0 2px">Modcode filter</span></div>
<div class="a" style="left:417px;top:466.09px;line-height:14px;font-size:12px;white-space:nowrap;color:#8d8d8d">Modcode</div>
<div class="a" style="left:488px;top:467px;width:221px;height:21px;background:#cccccc;border:1px solid #bfbfbf"></div>
<div class="a" style="left:492px;top:472.94px;line-height:13px;font-size:11px;white-space:nowrap;color:#838383">All</div>
<svg class="a" style="left:694px;top:467px" width="12" height="21"><path d="M2 8.5 L9 8.5 L5.5 12.5Z" fill="#f0f0f0"/></svg>
<div class="a" style="left:719px;top:467px;width:40px;height:21px;background:#cccccc;border:1px solid #bfbfbf"></div>
<div class="a" style="left:358px;top:503px;width:401px;height:182px;border:1px solid #dcdcdc"></div><div class="a" style="left:364px;top:496.94px;line-height:13px;font-size:11px;white-space:nowrap;color:#000"><span style="background:#f0f0f0;padding:0 2px">Результаты "слепого" поиска</span></div>
<div class="a" style="left:-157px;width:600px;text-align:right;top:517.92px;line-height:14px;font-size:12.5px;white-space:nowrap;font-weight:bold">RF уровень</div>
<div class="a" style="left:-157px;width:600px;text-align:right;top:541.92px;line-height:14px;font-size:12.5px;white-space:nowrap;font-weight:bold;letter-spacing:0.3px">Сигнал/Шум</div>
<div class="a" style="left:-157px;width:600px;text-align:right;top:566.92px;line-height:14px;font-size:12.5px;white-space:nowrap;font-weight:bold">BER</div>
<div class="a" style="left:-157px;width:600px;text-align:right;top:591.42px;line-height:14px;font-size:12.5px;white-space:nowrap;font-weight:bold">Bitrate</div>
<div class="a" style="left:447px;top:514px;width:95px;height:20px;background:#fff;border:1px solid #7a7a7a;overflow:hidden"></div>
<div class="a" style="left:451px;top:518.09px;line-height:14px;font-size:12px;white-space:nowrap;color:#1f5cff;font-weight:bold;letter-spacing:0.6px;overflow:hidden;width:73px">-28 dBm</div>
<div class="a" style="left:526px;top:516px;width:14px;height:9px;background:#f0f0f0;border:1px solid #cdcdcd"></div>
<div class="a" style="left:526px;top:524px;width:14px;height:8px;background:#f0f0f0;border:1px solid #cdcdcd"></div>
<svg class="a" style="left:526px;top:514px" width="14" height="20"><path d="M3.5 8.5 L7 5.0 L10.5 8.5Z" fill="#000"/><path d="M3.5 12.5 L7 16.0 L10.5 12.5Z" fill="#000"/></svg>
<div class="a" style="left:447px;top:538px;width:95px;height:20px;background:#fff;border:1px solid #7a7a7a;overflow:hidden"></div>
<div class="a" style="left:451px;top:542.09px;line-height:14px;font-size:12px;white-space:nowrap;color:#1b5e1b;font-weight:bold;letter-spacing:0.7px;overflow:hidden;width:73px">15,0 dB</div>
<div class="a" style="left:526px;top:540px;width:14px;height:9px;background:#f0f0f0;border:1px solid #cdcdcd"></div>
<div class="a" style="left:526px;top:548px;width:14px;height:8px;background:#f0f0f0;border:1px solid #cdcdcd"></div>
<svg class="a" style="left:526px;top:538px" width="14" height="20"><path d="M3.5 8.5 L7 5.0 L10.5 8.5Z" fill="#000"/><path d="M3.5 12.5 L7 16.0 L10.5 12.5Z" fill="#000"/></svg>
<div class="a" style="left:447px;top:562px;width:95px;height:21px;background:#fff;border:1px solid #7a7a7a;overflow:hidden"></div>
<div class="a" style="left:451px;top:567.09px;line-height:14px;font-size:12px;white-space:nowrap;color:#f00000;font-weight:bold;letter-spacing:1.1px;overflow:hidden;width:73px">0,0000000</div>
<div class="a" style="left:526px;top:564px;width:14px;height:9px;background:#f0f0f0;border:1px solid #cdcdcd"></div>
<div class="a" style="left:526px;top:572px;width:14px;height:9px;background:#f0f0f0;border:1px solid #cdcdcd"></div>
<svg class="a" style="left:526px;top:562px" width="14" height="21"><path d="M3.5 8.5 L7 5.0 L10.5 8.5Z" fill="#000"/><path d="M3.5 13.0 L7 16.5 L10.5 13.0Z" fill="#000"/></svg>
<div class="a" style="left:447px;top:588px;width:95px;height:20px;background:#fff;border:1px solid #7a7a7a;overflow:hidden"></div>
<div class="a" style="left:451px;top:592.09px;line-height:14px;font-size:12px;white-space:nowrap;color:#000;font-weight:bold;letter-spacing:0.9px;overflow:hidden;width:73px">93,719 Мбит/с</div>
<div class="a" style="left:526px;top:590px;width:14px;height:9px;background:#f0f0f0;border:1px solid #cdcdcd"></div>
<div class="a" style="left:526px;top:598px;width:14px;height:8px;background:#f0f0f0;border:1px solid #cdcdcd"></div>
<svg class="a" style="left:526px;top:588px" width="14" height="20"><path d="M3.5 8.5 L7 5.0 L10.5 8.5Z" fill="#000"/><path d="M3.5 12.5 L7 16.0 L10.5 12.5Z" fill="#000"/></svg>
<div class="a" style="left:363px;top:615px;width:13px;height:13px;background:#fff;border:1px solid #333"></div><svg class="a" style="left:363px;top:615px" width="13" height="13"><path d="M2.5 6.5 L5.2 9.3 L10.8 3.2" stroke="#222" stroke-width="1.3" fill="none"/></svg>
<div class="a" style="left:380px;top:615.94px;line-height:13px;font-size:11px;white-space:nowrap;">Обновлять инфо сигнале</div>
<div class="a" style="left:363px;top:639px;width:13px;height:13px;background:#fff;border:1px solid #333"></div>
<div class="a" style="left:380px;top:639.94px;line-height:13px;font-size:11px;white-space:nowrap;">Обновлять инфо о модуляции</div>
<div class="a" style="left:391px;top:663.94px;line-height:13px;font-size:11px;white-space:nowrap;">Выполнено за 0.475 sec</div>
<div class="a" style="left:33px;width:600px;text-align:right;top:517.92px;line-height:14px;font-size:12.5px;white-space:nowrap;font-weight:bold">Частота</div>
<div class="a" style="left:33px;width:600px;text-align:right;top:541.92px;line-height:14px;font-size:12.5px;white-space:nowrap;font-weight:bold;letter-spacing:-0.7px">Симв. скорость</div>
<div class="a" style="left:33px;width:600px;text-align:right;top:567.94px;line-height:13px;font-size:11px;white-space:nowrap;">Модуляция</div>
<div class="a" style="left:33px;width:600px;text-align:right;top:591.94px;line-height:13px;font-size:11px;white-space:nowrap;">FEC</div>
<div class="a" style="left:33px;width:600px;text-align:right;top:615.94px;line-height:13px;font-size:11px;white-space:nowrap;">IQ-спектр</div>
<div class="a" style="left:33px;width:600px;text-align:right;top:639.94px;line-height:13px;font-size:11px;white-space:nowrap;">RollOff</div>
<div class="a" style="left:33px;width:600px;text-align:right;top:664.94px;line-height:13px;font-size:11px;white-space:nowrap;text-decoration:underline">Ширина несущей</div>
<div class="a" style="left:638px;top:514px;width:95px;height:20px;background:#fff;border:1px solid #7a7a7a;overflow:hidden"></div>
<div class="a" style="left:642px;top:518.09px;line-height:14px;font-size:12px;white-space:nowrap;font-weight:bold;letter-spacing:0.3px;overflow:hidden;width:73px">10981,979 МГц</div>
<div class="a" style="left:717px;top:516px;width:14px;height:9px;background:#f0f0f0;border:1px solid #cdcdcd"></div>
<div class="a" style="left:717px;top:524px;width:14px;height:8px;background:#f0f0f0;border:1px solid #cdcdcd"></div>
<svg class="a" style="left:717px;top:514px" width="14" height="20"><path d="M3.5 8.5 L7 5.0 L10.5 8.5Z" fill="#000"/><path d="M3.5 12.5 L7 16.0 L10.5 12.5Z" fill="#000"/></svg>
<div class="a" style="left:638px;top:538px;width:95px;height:20px;background:#fff;border:1px solid #7a7a7a;overflow:hidden"></div>
<div class="a" style="left:642px;top:542.09px;line-height:14px;font-size:12px;white-space:nowrap;font-weight:bold;overflow:hidden;width:73px">42178 Кс</div>
<div class="a" style="left:717px;top:540px;width:14px;height:9px;background:#f0f0f0;border:1px solid #cdcdcd"></div>
<div class="a" style="left:717px;top:548px;width:14px;height:8px;background:#f0f0f0;border:1px solid #cdcdcd"></div>
<svg class="a" style="left:717px;top:538px" width="14" height="20"><path d="M3.5 8.5 L7 5.0 L10.5 8.5Z" fill="#000"/><path d="M3.5 12.5 L7 16.0 L10.5 12.5Z" fill="#000"/></svg>
<div class="a" style="left:638px;top:563px;width:95px;height:20px;background:#e1e1e1;border:1px solid #adadad"></div>
<div class="a" style="left:642px;top:567.94px;line-height:13px;font-size:11px;white-space:nowrap;color:#000"><span style="letter-spacing:-0.7px">DVBS2/8PSK</span></div>
<svg class="a" style="left:718px;top:563px" width="12" height="20"><path d="M2 8.0 L9 8.0 L5.5 12.0Z" fill="#000"/></svg>
<div class="a" style="left:638px;top:588px;width:95px;height:20px;background:#e1e1e1;border:1px solid #adadad"></div>
<div class="a" style="left:642px;top:592.94px;line-height:13px;font-size:11px;white-space:nowrap;color:#000">3/4</div>
<svg class="a" style="left:718px;top:588px" width="12" height="20"><path d="M2 8.0 L9 8.0 L5.5 12.0Z" fill="#000"/></svg>
<div class="a" style="left:638px;top:612px;width:95px;height:20px;background:#e1e1e1;border:1px solid #adadad"></div>
<div class="a" style="left:642px;top:616.94px;line-height:13px;font-size:11px;white-space:nowrap;color:#000">Инверсия</div>
<svg class="a" style="left:718px;top:612px" width="12" height="20"><path d="M2 8.0 L9 8.0 L5.5 12.0Z" fill="#000"/></svg>
<div class="a" style="left:638px;top:636px;width:95px;height:20px;background:#e1e1e1;border:1px solid #adadad"></div>
<div class="a" style="left:642px;top:640.94px;line-height:13px;font-size:11px;white-space:nowrap;color:#000">0.20</div>
<svg class="a" style="left:718px;top:636px" width="12" height="20"><path d="M2 8.0 L9 8.0 L5.5 12.0Z" fill="#000"/></svg>
<div class="a" style="left:638px;top:661px;width:95px;height:20px;background:#fff;border:1px solid #7a7a7a;overflow:hidden"></div>
<div class="a" style="left:642px;top:665.94px;line-height:13px;font-size:11px;white-space:nowrap;font-style:italic;overflow:hidden;width:73px">50,613 МГц</div>
<div class="a" style="left:717px;top:663px;width:14px;height:9px;background:#f0f0f0;border:1px solid #cdcdcd"></div>
<div class="a" style="left:717px;top:671px;width:14px;height:8px;background:#f0f0f0;border:1px solid #cdcdcd"></div>
<svg class="a" style="left:717px;top:661px" width="14" height="20"><path d="M3.5 8.5 L7 5.0 L10.5 8.5Z" fill="#000"/><path d="M3.5 12.5 L7 16.0 L10.5 12.5Z" fill="#000"/></svg>
<div class="a" style="left:734px;top:1px;width:1200px;height:768px;background:#f0f0f0;border:1px solid #7a7a7a;box-shadow:0 4px 18px rgba(0,0,0,0.38)"></div>
<div class="a" style="left:735px;top:2px;width:1170px;height:49px;background:#fff"></div>
<div class="a" style="left:743px;top:8px;width:16px;height:16px;background:#0a0a5a;color:#fff;font:bold 9px/16px 'Liberation Sans',sans-serif;letter-spacing:-1px;text-align:center">DVB</div>
<div class="a" style="left:764px;top:9.69px;line-height:14px;font-size:12px;white-space:nowrap;letter-spacing:-0.3px">Default -- TSReader Professional 2.8.48</div>
<div class="a" style="left:742px;top:34.59px;line-height:14px;font-size:12px;white-space:nowrap;">File</div>
<div class="a" style="left:774px;top:34.59px;line-height:14px;font-size:12px;white-space:nowrap;">Export</div>
<div class="a" style="left:822px;top:34.59px;line-height:14px;font-size:12px;white-space:nowrap;">View</div>
<div class="a" style="left:861px;top:34.59px;line-height:14px;font-size:12px;white-space:nowrap;">Record</div>
<div class="a" style="left:912px;top:34.59px;line-height:14px;font-size:12px;white-space:nowrap;">Playback</div>
<div class="a" style="left:973px;top:34.59px;line-height:14px;font-size:12px;white-space:nowrap;">Forward</div>
<div class="a" style="left:1030px;top:34.59px;line-height:14px;font-size:12px;white-space:nowrap;">Plugins</div>
<div class="a" style="left:1083px;top:34.59px;line-height:14px;font-size:12px;white-space:nowrap;">Settings</div>
<div class="a" style="left:1139px;top:34.59px;line-height:14px;font-size:12px;white-space:nowrap;">Help</div>
<div class="a" style="left:735px;top:51px;width:1170px;height:1px;background:#f0f0f0"></div>
<div class="a" style="left:735px;top:52px;width:240px;height:524px;background:#fff;border:1px solid #828282"></div>
<div class="a" style="left:747px;top:68px;width:1px;height:242px;background:repeating-linear-gradient(#808080 0 1px,transparent 1px 2px)"></div>
<div class="a" style="left:766px;top:70px;width:1px;height:102px;background:repeating-linear-gradient(#808080 0 1px,transparent 1px 2px)"></div>
<div class="a" style="left:766px;top:196px;width:1px;height:84px;background:repeating-linear-gradient(#808080 0 1px,transparent 1px 2px)"></div>
<div class="a" style="left:743px;top:59px;width:9px;height:9px;border:1px solid #a0a0a0;background:linear-gradient(#fff,#ddd)"></div><div class="a" style="left:745px;top:63px;width:5px;height:1px;background:#3050a0"></div>
<div class="a" style="left:752px;top:62px;width:7px;height:1px;background:repeating-linear-gradient(90deg,#808080 0 1px,transparent 1px 2px)"></div>
<div class="a" style="left:759px;top:54px;width:14px;height:15px;border-radius:3px;background:repeating-conic-gradient(#1fa01f 0 25%,#e8ffe8 0 50%) 0 0/2px 2px;border-right:1px solid #000;border-bottom:1px solid #000"></div><div class="a" style="left:759px;top:58px;width:10px;height:8px;background:#ffff00;font:bold 7px/8px 'Liberation Sans',sans-serif;color:#000;text-align:center;letter-spacing:-0.5px">PA</div>
<div class="a" style="left:780px;top:56.44px;line-height:13px;font-size:11px;white-space:nowrap;">PAT PID 0</div>
<div class="a" style="left:767px;top:80px;width:11px;height:1px;background:repeating-linear-gradient(90deg,#808080 0 1px,transparent 1px 2px)"></div>
<div class="a" style="left:778px;top:72px;width:14px;height:15px;border-radius:3px;background:repeating-conic-gradient(#1fa01f 0 25%,#e8ffe8 0 50%) 0 0/2px 2px;border-right:1px solid #000;border-bottom:1px solid #000"></div><div class="a" style="left:778px;top:76px;width:10px;height:8px;background:#ffff00;font:bold 7px/8px 'Liberation Sans',sans-serif;color:#000;text-align:center;letter-spacing:-0.5px">PM</div>
<div class="a" style="left:798px;top:74.44px;line-height:13px;font-size:11px;white-space:nowrap;">PMT PID 16 - Network</div>
<div class="a" style="left:762px;top:95px;width:9px;height:9px;border:1px solid #a0a0a0;background:linear-gradient(#fff,#ddd)"></div><div class="a" style="left:764px;top:99px;width:5px;height:1px;background:#3050a0"></div><div class="a" style="left:766px;top:97px;width:1px;height:5px;background:#3050a0"></div>
<div class="a" style="left:771px;top:98px;width:7px;height:1px;background:repeating-linear-gradient(90deg,#808080 0 1px,transparent 1px 2px)"></div>
<div class="a" style="left:778px;top:90px;width:14px;height:15px;border-radius:3px;background:repeating-conic-gradient(#1fa01f 0 25%,#e8ffe8 0 50%) 0 0/2px 2px;border-right:1px solid #000;border-bottom:1px solid #000"></div><div class="a" style="left:778px;top:94px;width:10px;height:8px;background:#ffff00;font:bold 7px/8px 'Liberation Sans',sans-serif;color:#000;text-align:center;letter-spacing:-0.5px">PM</div>
<div class="a" style="left:798px;top:92.44px;line-height:13px;font-size:11px;white-space:nowrap;">PMT PID 101 - Progr. 1</div>
<div class="a" style="left:762px;top:113px;width:9px;height:9px;border:1px solid #a0a0a0;background:linear-gradient(#fff,#ddd)"></div><div class="a" style="left:764px;top:117px;width:5px;height:1px;background:#3050a0"></div><div class="a" style="left:766px;top:115px;width:1px;height:5px;background:#3050a0"></div>
<div class="a" style="left:771px;top:116px;width:7px;height:1px;background:repeating-linear-gradient(90deg,#808080 0 1px,transparent 1px 2px)"></div>
<div class="a" style="left:778px;top:108px;width:14px;height:15px;border-radius:3px;background:repeating-conic-gradient(#1fa01f 0 25%,#e8ffe8 0 50%) 0 0/2px 2px;border-right:1px solid #000;border-bottom:1px solid #000"></div><div class="a" style="left:778px;top:112px;width:10px;height:8px;background:#ffff00;font:bold 7px/8px 'Liberation Sans',sans-serif;color:#000;text-align:center;letter-spacing:-0.5px">PM</div>
<div class="a" style="left:798px;top:110.44px;line-height:13px;font-size:11px;white-space:nowrap;">PMT PID 102 - Progr. 2</div>
<div class="a" style="left:762px;top:131px;width:9px;height:9px;border:1px solid #a0a0a0;background:linear-gradient(#fff,#ddd)"></div><div class="a" style="left:764px;top:135px;width:5px;height:1px;background:#3050a0"></div><div class="a" style="left:766px;top:133px;width:1px;height:5px;background:#3050a0"></div>
<div class="a" style="left:771px;top:134px;width:7px;height:1px;background:repeating-linear-gradient(90deg,#808080 0 1px,transparent 1px 2px)"></div>
<div class="a" style="left:778px;top:126px;width:14px;height:15px;border-radius:3px;background:repeating-conic-gradient(#1fa01f 0 25%,#e8ffe8 0 50%) 0 0/2px 2px;border-right:1px solid #000;border-bottom:1px solid #000"></div><div class="a" style="left:778px;top:130px;width:10px;height:8px;background:#ffff00;font:bold 7px/8px 'Liberation Sans',sans-serif;color:#000;text-align:center;letter-spacing:-0.5px">PM</div>
<div class="a" style="left:798px;top:128.44px;line-height:13px;font-size:11px;white-space:nowrap;">PMT PID 103 - Progr. 3</div>
<div class="a" style="left:762px;top:149px;width:9px;height:9px;border:1px solid #a0a0a0;background:linear-gradient(#fff,#ddd)"></div><div class="a" style="left:764px;top:153px;width:5px;height:1px;background:#3050a0"></div><div class="a" style="left:766px;top:151px;width:1px;height:5px;background:#3050a0"></div>
<div class="a" style="left:771px;top:152px;width:7px;height:1px;background:repeating-linear-gradient(90deg,#808080 0 1px,transparent 1px 2px)"></div>
<div class="a" style="left:778px;top:144px;width:14px;height:15px;border-radius:3px;background:repeating-conic-gradient(#1fa01f 0 25%,#e8ffe8 0 50%) 0 0/2px 2px;border-right:1px solid #000;border-bottom:1px solid #000"></div><div class="a" style="left:778px;top:148px;width:10px;height:8px;background:#ffff00;font:bold 7px/8px 'Liberation Sans',sans-serif;color:#000;text-align:center;letter-spacing:-0.5px">PM</div>
<div class="a" style="left:798px;top:146.44px;line-height:13px;font-size:11px;white-space:nowrap;">PMT PID 104 - Progr. 4</div>
<div class="a" style="left:762px;top:167px;width:9px;height:9px;border:1px solid #a0a0a0;background:linear-gradient(#fff,#ddd)"></div><div class="a" style="left:764px;top:171px;width:5px;height:1px;background:#3050a0"></div><div class="a" style="left:766px;top:169px;width:1px;height:5px;background:#3050a0"></div>
<div class="a" style="left:771px;top:170px;width:7px;height:1px;background:repeating-linear-gradient(90deg,#808080 0 1px,transparent 1px 2px)"></div>
<div class="a" style="left:778px;top:162px;width:14px;height:15px;border-radius:3px;background:repeating-conic-gradient(#1fa01f 0 25%,#e8ffe8 0 50%) 0 0/2px 2px;border-right:1px solid #000;border-bottom:1px solid #000"></div><div class="a" style="left:778px;top:166px;width:10px;height:8px;background:#ffff00;font:bold 7px/8px 'Liberation Sans',sans-serif;color:#000;text-align:center;letter-spacing:-0.5px">PM</div>
<div class="a" style="left:798px;top:164.44px;line-height:13px;font-size:11px;white-space:nowrap;">PMT PID 105 - Progr. 5</div>
<div class="a" style="left:743px;top:185px;width:9px;height:9px;border:1px solid #a0a0a0;background:linear-gradient(#fff,#ddd)"></div><div class="a" style="left:745px;top:189px;width:5px;height:1px;background:#3050a0"></div>
<div class="a" style="left:752px;top:188px;width:7px;height:1px;background:repeating-linear-gradient(90deg,#808080 0 1px,transparent 1px 2px)"></div>
<div class="a" style="left:759px;top:180px;width:14px;height:15px;border-radius:3px;background:repeating-conic-gradient(#1fa01f 0 25%,#e8ffe8 0 50%) 0 0/2px 2px;border-right:1px solid #000;border-bottom:1px solid #000"></div><div class="a" style="left:759px;top:184px;width:10px;height:8px;background:#ffff00;font:bold 7px/8px 'Liberation Sans',sans-serif;color:#000;text-align:center;letter-spacing:-0.5px">SD</div>
<div class="a" style="left:777px;top:180px;width:83px;height:19px;background:#0078d7;border:1px dotted #d08020"></div>
<div class="a" style="left:780px;top:182.44px;line-height:13px;font-size:11px;white-space:nowrap;color:#fff">SDT PID 17 &lt;5&gt;</div>
<div class="a" style="left:767px;top:206px;width:11px;height:1px;background:repeating-linear-gradient(90deg,#808080 0 1px,transparent 1px 2px)"></div>
<div class="a" style="left:778px;top:198px;width:14px;height:15px;border-radius:3px;background:repeating-conic-gradient(#1fa01f 0 25%,#e8ffe8 0 50%) 0 0/2px 2px;border-right:1px solid #000;border-bottom:1px solid #000"></div><div class="a" style="left:778px;top:202px;width:10px;height:8px;background:#ffff00;font:bold 7px/8px 'Liberation Sans',sans-serif;color:#000;text-align:center;letter-spacing:-0.5px">SD</div>
<div class="a" style="left:798px;top:200.44px;line-height:13px;font-size:11px;white-space:nowrap;">1 Travel+Adventure HD</div>
<div class="a" style="left:767px;top:224px;width:11px;height:1px;background:repeating-linear-gradient(90deg,#808080 0 1px,transparent 1px 2px)"></div>
<div class="a" style="left:778px;top:216px;width:14px;height:15px;border-radius:3px;background:repeating-conic-gradient(#1fa01f 0 25%,#e8ffe8 0 50%) 0 0/2px 2px;border-right:1px solid #000;border-bottom:1px solid #000"></div><div class="a" style="left:778px;top:220px;width:10px;height:8px;background:#ffff00;font:bold 7px/8px 'Liberation Sans',sans-serif;color:#000;text-align:center;letter-spacing:-0.5px">SD</div>
<div class="a" style="left:798px;top:218.44px;line-height:13px;font-size:11px;white-space:nowrap;">2 Travel+Adventure</div>
<div class="a" style="left:767px;top:242px;width:11px;height:1px;background:repeating-linear-gradient(90deg,#808080 0 1px,transparent 1px 2px)"></div>
<div class="a" style="left:778px;top:234px;width:14px;height:15px;border-radius:3px;background:repeating-conic-gradient(#1fa01f 0 25%,#e8ffe8 0 50%) 0 0/2px 2px;border-right:1px solid #000;border-bottom:1px solid #000"></div><div class="a" style="left:778px;top:238px;width:10px;height:8px;background:#ffff00;font:bold 7px/8px 'Liberation Sans',sans-serif;color:#000;text-align:center;letter-spacing:-0.5px">SD</div>
<div class="a" style="left:798px;top:236.44px;line-height:13px;font-size:11px;white-space:nowrap;">3 Kaleidoskop TV</div>
<div class="a" style="left:767px;top:260px;width:11px;height:1px;background:repeating-linear-gradient(90deg,#808080 0 1px,transparent 1px 2px)"></div>
<div class="a" style="left:778px;top:252px;width:14px;height:15px;border-radius:3px;background:repeating-conic-gradient(#1fa01f 0 25%,#e8ffe8 0 50%) 0 0/2px 2px;border-right:1px solid #000;border-bottom:1px solid #000"></div><div class="a" style="left:778px;top:256px;width:10px;height:8px;background:#ffff00;font:bold 7px/8px 'Liberation Sans',sans-serif;color:#000;text-align:center;letter-spacing:-0.5px">SD</div>
<div class="a" style="left:798px;top:254.44px;line-height:13px;font-size:11px;white-space:nowrap;">4 Pes i ko</div>
<div class="a" style="left:767px;top:278px;width:11px;height:1px;background:repeating-linear-gradient(90deg,#808080 0 1px,transparent 1px 2px)"></div>
<div class="a" style="left:778px;top:270px;width:14px;height:15px;border-radius:3px;background:repeating-conic-gradient(#1fa01f 0 25%,#e8ffe8 0 50%) 0 0/2px 2px;border-right:1px solid #000;border-bottom:1px solid #000"></div><div class="a" style="left:778px;top:274px;width:10px;height:8px;background:#ffff00;font:bold 7px/8px 'Liberation Sans',sans-serif;color:#000;text-align:center;letter-spacing:-0.5px">SD</div>
<div class="a" style="left:798px;top:272.44px;line-height:13px;font-size:11px;white-space:nowrap;">5 Raz TV</div>
<div class="a" style="left:743px;top:293px;width:9px;height:9px;border:1px solid #a0a0a0;background:linear-gradient(#fff,#ddd)"></div><div class="a" style="left:745px;top:297px;width:5px;height:1px;background:#3050a0"></div><div class="a" style="left:747px;top:295px;width:1px;height:5px;background:#3050a0"></div>
<div class="a" style="left:752px;top:296px;width:7px;height:1px;background:repeating-linear-gradient(90deg,#808080 0 1px,transparent 1px 2px)"></div>
<div class="a" style="left:759px;top:288px;width:14px;height:15px;border-radius:3px;background:repeating-conic-gradient(#1fa01f 0 25%,#e8ffe8 0 50%) 0 0/2px 2px;border-right:1px solid #000;border-bottom:1px solid #000"></div><div class="a" style="left:759px;top:292px;width:10px;height:8px;background:#ffff00;font:bold 7px/8px 'Liberation Sans',sans-serif;color:#000;text-align:center;letter-spacing:-0.5px">CA</div>
<div class="a" style="left:780px;top:290.44px;line-height:13px;font-size:11px;white-space:nowrap;">CAT PID 1</div>
<div class="a" style="left:743px;top:311px;width:9px;height:9px;border:1px solid #a0a0a0;background:linear-gradient(#fff,#ddd)"></div><div class="a" style="left:745px;top:315px;width:5px;height:1px;background:#3050a0"></div><div class="a" style="left:747px;top:313px;width:1px;height:5px;background:#3050a0"></div>
<div class="a" style="left:752px;top:314px;width:7px;height:1px;background:repeating-linear-gradient(90deg,#808080 0 1px,transparent 1px 2px)"></div>
<div class="a" style="left:759px;top:306px;width:14px;height:15px;border-radius:3px;background:repeating-conic-gradient(#1fa01f 0 25%,#e8ffe8 0 50%) 0 0/2px 2px;border-right:1px solid #000;border-bottom:1px solid #000"></div><div class="a" style="left:759px;top:310px;width:10px;height:8px;background:#ffff00;font:bold 7px/8px 'Liberation Sans',sans-serif;color:#000;text-align:center;letter-spacing:-0.5px">NI</div>
<div class="a" style="left:780px;top:308.44px;line-height:13px;font-size:11px;white-space:nowrap;">NIT PID 16 &lt;1&gt;</div>
<div class="a" style="left:980px;top:52px;width:368px;height:221px;background:#fff;border:1px solid #828282"></div>
<div class="a" style="left:985px;top:55.94px;line-height:13px;font-size:11px;white-space:nowrap;">SDT defines 5 channel(s)</div>
<svg class="a" style="left:1351px;top:57px" width="12" height="8"><path d="M2 6 L6 2 L10 6" stroke="#a6a6a6" stroke-width="1.6" fill="none"/></svg>
<svg class="a" style="left:1351px;top:261px" width="12" height="8"><path d="M2 2 L6 6 L10 2" stroke="#a6a6a6" stroke-width="1.6" fill="none"/></svg>
<div class="a" style="left:981px;top:282px;width:386px;height:293px;border:1px solid #dcdcdc"></div>
<div class="a" style="left:988px;top:276.94px;line-height:13px;font-size:11px;white-space:nowrap;"><span style="background:#f0f0f0;padding:0 2px">Active PIDs</span></div>
<div class="a" style="left:1050px;top:283px;width:13px;height:13px;background:#fff;border:1px solid #333"></div>
<div class="a" style="left:1066px;top:283.94px;line-height:13px;font-size:11px;white-space:nowrap;">Disabled</div>
<div class="a" style="left:1116px;top:283px;width:13px;height:13px;background:#fff;border:1px solid #333"></div>
<div class="a" style="left:1131px;top:283.94px;line-height:13px;font-size:11px;white-space:nowrap;">Sort Decending</div>
<svg class="a" style="left:1210px;top:282px" width="14" height="14"><circle cx="7" cy="7" r="6" fill="#fff" stroke="#333"/><circle cx="7" cy="7" r="3.2" fill="#222"/></svg>
<div class="a" style="left:1227px;top:283.94px;line-height:13px;font-size:11px;white-space:nowrap;">Sort by Rate</div>
<svg class="a" style="left:1291px;top:282px" width="14" height="14"><circle cx="7" cy="7" r="6" fill="#fff" stroke="#333"/></svg>
<div class="a" style="left:1308px;top:283.94px;line-height:13px;font-size:11px;white-space:nowrap;">Sort by PID</div>
<div class="a" style="left:991px;top:301px;width:316px;height:12px;background:#00ff00"></div>
<div class="a" style="left:706px;width:600px;text-align:right;top:302.79px;line-height:12px;font-size:10px;white-space:nowrap;letter-spacing:-0.3px">8191 (87.05% ~ 81.83 Mbps)</div>
<div class="a" style="left:986px;top:314px;width:365px;height:266px;overflow:hidden">
<div class="a" style="left:5px;top:1px;width:12px;height:12px;background:#ff0000"></div>
<div class="a" style="left:22px;top:1.79px;line-height:12px;font-size:10px;white-space:nowrap;letter-spacing:-0.3px;color:#ff0000">1001 (3.77% - 3.55 Mbps)</div>
<div class="a" style="left:5px;top:15px;width:7px;height:12px;background:#ff0000"></div>
<div class="a" style="left:17px;top:15.79px;line-height:12px;font-size:10px;white-space:nowrap;letter-spacing:-0.3px;color:#ff0000">1002 (2.17% - 2.05 Mbps)</div>
<div class="a" style="left:5px;top:29px;width:7px;height:12px;background:#00ff00"></div>
<div class="a" style="left:17px;top:29.79px;line-height:12px;font-size:10px;white-space:nowrap;letter-spacing:-0.3px;color:#000">1003 (2.07% - 1.98 Mbps)</div>
<div class="a" style="left:5px;top:43px;width:6px;height:12px;background:#00ff00"></div>
<div class="a" style="left:16px;top:43.78px;line-height:12px;font-size:10px;white-space:nowrap;letter-spacing:-0.3px;color:#000">1005 (1.81% - 1.71 Mbps)</div>
<div class="a" style="left:5px;top:57px;width:6px;height:12px;background:#00ff00"></div>
<div class="a" style="left:16px;top:57.78px;line-height:12px;font-size:10px;white-space:nowrap;letter-spacing:-0.3px;color:#000">1004 (1.66% - 1.63 Mbps)</div>
<div class="a" style="left:9.5px;top:71.78px;line-height:12px;font-size:10px;white-space:nowrap;letter-spacing:-0.3px;color:#ff0000">1102 (0.21% ~ 196.65 Kbps)</div>
<div class="a" style="left:9.5px;top:85.78px;line-height:12px;font-size:10px;white-space:nowrap;letter-spacing:-0.3px;color:#ff0000">1201 (0.21% ~ 196.65 Kbps)</div>
<div class="a" style="left:9.5px;top:99.78px;line-height:12px;font-size:10px;white-space:nowrap;letter-spacing:-0.3px;color:#ff0000">1225 (0.21% ~ 196.48 Kbps)</div>
<div class="a" style="left:9.5px;top:113.78px;line-height:12px;font-size:10px;white-space:nowrap;letter-spacing:-0.3px;color:#ff0000">1101 (0.21% ~ 196.48 Kbps)</div>
<div class="a" style="left:9.5px;top:127.78px;line-height:12px;font-size:10px;white-space:nowrap;letter-spacing:-0.3px;color:#000">1105 (0.18% ~ 166.99 Kbps)</div>
<div class="a" style="left:9.5px;top:141.78px;line-height:12px;font-size:10px;white-space:nowrap;letter-spacing:-0.3px;color:#000">1104 (0.17% ~ 156.71 Kbps)</div>
<div class="a" style="left:9.5px;top:155.78px;line-height:12px;font-size:10px;white-space:nowrap;letter-spacing:-0.3px;color:#000">1103 (0.14% ~ 135.82 Kbps)</div>
<div class="a" style="left:9.5px;top:169.78px;line-height:12px;font-size:10px;white-space:nowrap;letter-spacing:-0.3px;color:#ff0000">1301 (0.04% ~ 37.58 Kbps)</div>
<div class="a" style="left:9.5px;top:183.78px;line-height:12px;font-size:10px;white-space:nowrap;letter-spacing:-0.3px;color:#ff0000">1302 (0.04% ~ 37.58 Kbps)</div>
<div class="a" style="left:9.5px;top:197.78px;line-height:12px;font-size:10px;white-space:nowrap;letter-spacing:-0.3px;color:#000">1368 (0.01% ~ 5.06 Kbps)</div>
<div class="a" style="left:9.5px;top:211.78px;line-height:12px;font-size:10px;white-space:nowrap;letter-spacing:-0.3px;color:#000">1367 (0.01% ~ 5.06 Kbps)</div>
<div class="a" style="left:9.5px;top:225.78px;line-height:12px;font-size:10px;white-space:nowrap;letter-spacing:-0.3px;color:#000">1369 (0.01% ~ 4.89 Kbps)</div>
<div class="a" style="left:9.5px;top:239.78px;line-height:12px;font-size:10px;white-space:nowrap;letter-spacing:-0.3px;color:#000">1376 (0.01% ~ 4.89 Kbps)</div>
<div class="a" style="left:9.5px;top:253.78px;line-height:12px;font-size:10px;white-space:nowrap;letter-spacing:-0.3px;color:#000">1345 (0.01% ~ 4.72 Kbps)</div>
</div>
<div class="a" style="left:1353px;top:296px;width:1px;height:280px;background:#fafafa"></div>
<svg class="a" style="left:1353px;top:301px" width="12" height="8"><path d="M2 6 L6 2 L10 6" stroke="#606060" stroke-width="2" fill="none"/></svg>
<div class="a" style="left:1354px;top:313px;width:10px;height:17px;background:#cdcdcd"></div>
<svg class="a" style="left:1353px;top:562px" width="12" height="8"><path d="M2 2 L6 6 L10 2" stroke="#606060" stroke-width="2" fill="none"/></svg>
<div class="a" style="left:736px;top:585px;width:241px;height:157px;border:1px solid #dcdcdc"></div>
<div class="a" style="left:742px;top:578.94px;line-height:13px;font-size:11px;white-space:nowrap;"><span style="background:#f0f0f0;padding:0 2px">General Information</span></div>
<div class="a" style="left:743px;top:598px;width:232px;height:16px;background:#0a8a2e"></div>
<div class="a" style="left:743.5px;top:599.59px;line-height:14px;font-size:12px;white-space:nowrap;color:#fff">Source: TCP/IP</div>
<div class="a" style="left:743px;top:614px;width:232px;height:16px;background:#2afc86"></div>
<div class="a" style="left:743.5px;top:615.59px;line-height:14px;font-size:12px;white-space:nowrap;color:#000">Tuner: 127.0.0.1 port 6970</div>
<div class="a" style="left:743px;top:630px;width:232px;height:16px;background:#0a8a2e"></div>
<div class="a" style="left:743.5px;top:631.59px;line-height:14px;font-size:12px;white-space:nowrap;color:#fff">Signal: n/a</div>
<div class="a" style="left:743px;top:646px;width:232px;height:16px;background:#2afc86"></div>
<div class="a" style="left:743px;top:662px;width:232px;height:16px;background:#0a8a2e"></div>
<div class="a" style="left:743.5px;top:663.59px;line-height:14px;font-size:12px;white-space:nowrap;color:#fff">Null BER: 0.000000E+000</div>
<div class="a" style="left:743px;top:678px;width:232px;height:16px;background:#2afc86"></div>
<div class="a" style="left:743px;top:694px;width:232px;height:16px;background:#0a8a2e"></div>
<div class="a" style="left:743.5px;top:695.59px;line-height:14px;font-size:12px;white-space:nowrap;color:#fff">Profile: Default</div>
<div class="a" style="left:743px;top:710px;width:232px;height:16px;background:#2afc86"></div>
<div class="a" style="left:743.5px;top:711.59px;line-height:14px;font-size:12px;white-space:nowrap;color:#000">Network Type: DVB</div>
<div class="a" style="left:743px;top:726px;width:232px;height:16px;background:#0a8a2e"></div>
<div class="a" style="left:743.5px;top:727.59px;line-height:14px;font-size:12px;white-space:nowrap;color:#fff">Run Time: 000:00:09</div>
<div class="a" style="left:982px;top:585px;width:384px;height:157px;border:1px solid #dcdcdc"></div>
<div class="a" style="left:989px;top:578.94px;line-height:13px;font-size:11px;white-space:nowrap;"><span style="background:#f0f0f0;padding:0 2px">MPEG-2 Statistics</span></div>
<div class="a" style="left:990px;top:596px;width:374px;height:144px;background:#000"></div>
<div class="a" style="left:1075.5px;top:600.09px;line-height:14px;font-size:12px;white-space:nowrap;color:#00e000">PAT</div>
<div class="a" style="left:1122.5px;top:600.09px;line-height:14px;font-size:12px;white-space:nowrap;color:#00e000">PMT</div>
<div class="a" style="left:1169.6px;top:600.09px;line-height:14px;font-size:12px;white-space:nowrap;color:#00e000">CAT</div>
<div class="a" style="left:1216.5px;top:600.09px;line-height:14px;font-size:12px;white-space:nowrap;color:#00e000">NIT</div>
<div class="a" style="left:1263.6px;top:600.09px;line-height:14px;font-size:12px;white-space:nowrap;color:#00e000">SDT</div>
<div class="a" style="left:1310.7px;top:600.09px;line-height:14px;font-size:12px;white-space:nowrap;color:#00e000">EIT</div>
<div class="a" style="left:995.5px;top:616.09px;line-height:14px;font-size:12px;white-space:nowrap;color:#00e000">Sections</div>
<div class="a" style="left:1075.5px;top:616.09px;line-height:14px;font-size:12px;white-space:nowrap;color:#00e000">17</div>
<div class="a" style="left:1122.5px;top:616.09px;line-height:14px;font-size:12px;white-space:nowrap;color:#00e000">52</div>
<div class="a" style="left:1169.6px;top:616.09px;line-height:14px;font-size:12px;white-space:nowrap;color:#00e000">18</div>
<div class="a" style="left:1216.5px;top:616.09px;line-height:14px;font-size:12px;white-space:nowrap;color:#00e000">16</div>
<div class="a" style="left:1263.6px;top:616.09px;line-height:14px;font-size:12px;white-space:nowrap;color:#00e000">18</div>
<div class="a" style="left:1310.7px;top:616.09px;line-height:14px;font-size:12px;white-space:nowrap;color:#00e000">0</div>
<div class="a" style="left:995.5px;top:632.09px;line-height:14px;font-size:12px;white-space:nowrap;color:#00e000">CRC Errors</div>
<div class="a" style="left:1075.5px;top:632.09px;line-height:14px;font-size:12px;white-space:nowrap;color:#00e000">0</div>
<div class="a" style="left:1122.5px;top:632.09px;line-height:14px;font-size:12px;white-space:nowrap;color:#00e000">0</div>
<div class="a" style="left:1169.6px;top:632.09px;line-height:14px;font-size:12px;white-space:nowrap;color:#00e000">0</div>
<div class="a" style="left:1216.5px;top:632.09px;line-height:14px;font-size:12px;white-space:nowrap;color:#00e000">0</div>
<div class="a" style="left:1263.6px;top:632.09px;line-height:14px;font-size:12px;white-space:nowrap;color:#00e000">0</div>
<div class="a" style="left:1310.7px;top:632.09px;line-height:14px;font-size:12px;white-space:nowrap;color:#00e000">0</div>
<div class="a" style="left:995.5px;top:650.09px;line-height:14px;font-size:12px;white-space:nowrap;color:#00e000">Continuity Errors:</div>
<div class="a" style="left:1120.6px;top:650.09px;line-height:14px;font-size:12px;white-space:nowrap;color:#00e000">0</div>
<div class="a" style="left:1184.7px;top:650.09px;line-height:14px;font-size:12px;white-space:nowrap;color:#00e000">Mux. bitrate:</div>
<div class="a" style="left:1265.6px;top:650.09px;line-height:14px;font-size:12px;white-space:nowrap;color:#00e000">94000799 bps</div>
<div class="a" style="left:995.5px;top:666.09px;line-height:14px;font-size:12px;white-space:nowrap;color:#00e000">TEI Errors:</div>
<div class="a" style="left:1120.6px;top:666.09px;line-height:14px;font-size:12px;white-space:nowrap;color:#00e000">0</div>
<div class="a" style="left:1184.7px;top:666.09px;line-height:14px;font-size:12px;white-space:nowrap;color:#00e000">Last sec.:</div>
<div class="a" style="left:1265.6px;top:666.09px;line-height:14px;font-size:12px;white-space:nowrap;color:#00e000">94.734 Mbit</div>
<div class="a" style="left:995.5px;top:682.09px;line-height:14px;font-size:12px;white-space:nowrap;color:#00e000">Sync losses:</div>
<div class="a" style="left:1120.6px;top:682.09px;line-height:14px;font-size:12px;white-space:nowrap;color:#00e000">0</div>
<div class="a" style="left:1184.7px;top:682.09px;line-height:14px;font-size:12px;white-space:nowrap;color:#00e000">In buffer:</div>
<div class="a" style="left:1184.7px;top:698.09px;line-height:14px;font-size:12px;white-space:nowrap;color:#00e000">Out buffer:</div>
<div class="a" style="left:735px;top:744px;width:1170px;height:1px;background:#dadada"></div>
<div class="a" style="left:737.5px;top:750.27px;line-height:13px;font-size:11.5px;white-space:nowrap;">TSReader: Completed PMT for program 1 on PID 0x0065 - 0 PMT left to process</div>
<div class="a" style="left:1337px;top:747px;width:1px;height:20px;background:#d4d4d4"></div>
<div class="a" style="left:1672px;top:747px;width:1px;height:20px;background:#d4d4d4"></div>
<div class="a" style="left:1371px;top:58px;width:600px;height:684px;border:1px solid #dcdcdc"></div>
<div class="a" style="left:1378px;top:52.27px;line-height:13px;font-size:11.5px;white-space:nowrap;"><span style="background:#f0f0f0;padding:0 2px">Video Decode</span></div>
<div class="a" style="left:1380px;top:72px;width:600px;height:668px;background:#000"></div>
<div class="a" style="left:1380px;top:72px;width:240px;height:216px;overflow:hidden;background:#fff">
<div class="a" style="left:119px;top:0px;width:121px;height:216px;background:#2db4c2"></div>
<div class="a" style="left:0px;top:170px;width:119px;height:46px;background:linear-gradient(rgba(255,255,255,0),rgba(150,150,150,0.55) 60%,rgba(110,110,110,0.8))"></div>
<svg class="a" style="left:0;top:0" width="240" height="216">
<g transform="translate(-1380,-72)">
<!-- woman 1 -->
<path d="M1406 104 Q1413 96 1421 103 Q1426 125 1424 150 L1420 160 L1405 160 Q1401 135 1406 104Z" fill="#1e1a1a"/>
<ellipse cx="1415" cy="112" rx="4.5" ry="7" fill="#dcb49c"/>
<path d="M1404 128 Q1414 122 1425 128 L1428 170 L1426 183 L1403 183 L1401 165Z" fill="#5b86b8"/>
<path d="M1404 182 L1425 182 L1424 216 L1405 216Z" fill="#b3701c"/>
<path d="M1408 216 L1413 216 L1412 252 L1409 252Z M1416 216 L1421 216 L1420 252 L1417 252Z" fill="#e4bea4"/>
<path d="M1406 251 L1414 251 L1413 257 L1405 257Z M1415 251 L1423 251 L1422 257 L1414 257Z" fill="#b88a60"/>
<!-- woman 2 -->
<path d="M1434 104 Q1441 96 1449 103 Q1454 125 1452 150 L1448 158 L1433 158 Q1429 135 1434 104Z" fill="#1e1a1a"/>
<ellipse cx="1443" cy="112" rx="4.5" ry="7" fill="#dcb49c"/>
<path d="M1432 127 Q1442 121 1453 127 L1456 172 L1454 187 L1431 187 L1429 168Z" fill="#d6ac22"/>
<path d="M1434 186 L1452 186 L1451 252 L1445 252 L1443 200 L1441 252 L1435 252Z" fill="#4a2352"/>
<path d="M1434 251 L1442 251 L1441 257 L1433 257Z M1444 251 L1452 251 L1451 257 L1443 257Z" fill="#b88a60"/>
<!-- woman 3 -->
<path d="M1460 104 Q1467 96 1475 103 Q1480 125 1478 150 L1474 158 L1459 158 Q1455 135 1460 104Z" fill="#1e1a1a"/>
<ellipse cx="1469" cy="112" rx="4.5" ry="7" fill="#dcb49c"/>
<path d="M1457 127 Q1468 121 1479 127 L1482 170 L1480 183 L1457 183 L1455 165Z" fill="#15604e"/>
<path d="M1456 182 L1480 182 L1484 224 L1452 224Z" fill="#d9a2a6"/>
<path d="M1462 224 L1467 224 L1466 252 L1463 252Z M1470 224 L1475 224 L1474 252 L1471 252Z" fill="#e4bea4"/>
<path d="M1460 251 L1468 251 L1467 257 L1459 257Z M1469 251 L1477 251 L1476 257 L1468 257Z" fill="#b88a60"/>
</g></svg>
<div class="a" style="left:95px;top:66px;width:51px;height:83px;background:#fff;border:2.5px solid #e01f3d;border-radius:50%"></div>
<div class="a" style="left:-179.5px;width:600px;text-align:center;top:81.97px;line-height:39px;font-size:34px;white-space:nowrap;font-weight:bold;color:#e01f3d"><span style="display:inline-block;transform:scaleX(0.6)">3=2</span></div>
<div class="a" style="left:-179.5px;width:600px;text-align:center;top:117.98px;line-height:9px;font-size:8px;white-space:nowrap;color:#e01f3d"><span style="display:inline-block;transform:scaleX(0.55)">ТРИ ВЕЩИ</span></div>
<div class="a" style="left:-179.5px;width:600px;text-align:center;top:126.98px;line-height:9px;font-size:8px;white-space:nowrap;color:#e01f3d"><span style="display:inline-block;transform:scaleX(0.55)">ПО ЦЕНЕ ДВУХ</span></div>
<div class="a" style="left:25px;top:154px;width:62px;height:23px;background:#ececec;border-radius:11px"></div>
<div class="a" style="left:28px;top:157px;width:10px;height:17px;border:2.5px solid #2db4c2;border-radius:50%"></div>
<div class="a" style="left:41px;top:159.94px;line-height:13px;font-size:11px;white-space:nowrap;color:#333;font-weight:bold"><span style="display:inline-block;transform:scaleX(0.62);transform-origin:0 50%">РАЗМЕРЫ 46-68</span></div>
<div class="a" style="left:187px;top:17px;width:23px;height:38px;border:1.5px solid #fff;border-radius:50%"></div>
<div class="a" style="left:-101.5px;width:600px;text-align:center;top:24.79px;line-height:12px;font-size:10px;white-space:nowrap;color:#fff;font-weight:bold"><span style="display:inline-block;transform:scaleX(0.7);transform-origin:100% 50%">Shop&amp;</span></div>
<div class="a" style="left:-101.5px;width:600px;text-align:center;top:34.78px;line-height:12px;font-size:10px;white-space:nowrap;color:#fff;font-weight:bold"><span style="display:inline-block;transform:scaleX(0.7);transform-origin:100% 50%">Show</span></div>
<div class="a" style="left:211px;top:22px;width:9px;height:21px;background:linear-gradient(135deg,#e0208a,#f0c020 50%,#30a0e0);opacity:0.85"></div>
<div class="a" style="left:-389px;width:600px;text-align:right;top:60.55px;line-height:17px;font-size:15px;white-space:nowrap;color:#2a3a4a"><span style="display:inline-block;transform:scaleX(0.55);transform-origin:100% 50%">Водолазка</span></div>
<div class="a" style="left:-389px;width:600px;text-align:right;top:74.55px;line-height:17px;font-size:15px;white-space:nowrap;color:#2a3a4a"><span style="display:inline-block;transform:scaleX(0.55);transform-origin:100% 50%">«Мария»</span></div>
<div class="a" style="left:-389px;width:600px;text-align:right;top:91.94px;line-height:13px;font-size:11px;white-space:nowrap;color:#2a3a4a;text-decoration:line-through"><span style="display:inline-block;transform:scaleX(0.6);transform-origin:100% 50%">1 299 ₽</span></div>
<div class="a" style="left:-389px;width:600px;text-align:right;top:103.82px;line-height:23px;font-size:20px;white-space:nowrap;color:#e01f3d;font-weight:bold"><span style="display:inline-block;transform:scaleX(0.6);transform-origin:100% 50%">667 ₽</span></div>
<div class="a" style="left:-389px;width:600px;text-align:right;top:123.98px;line-height:9px;font-size:8px;white-space:nowrap;color:#2a3a4a"><span style="display:inline-block;transform:scaleX(0.5);transform-origin:100% 50%">Цена при покупке 3-х вещей</span></div>
<div class="a" style="left:-389px;width:600px;text-align:right;top:144.94px;line-height:13px;font-size:11px;white-space:nowrap;color:#2a3a4a"><span style="display:inline-block;transform:scaleX(0.55);transform-origin:100% 50%">WWW.VODOLAZKITUT.RU</span></div>
<div class="a" style="left:-388px;width:600px;text-align:right;top:153.82px;line-height:23px;font-size:20px;white-space:nowrap;color:#fff;font-weight:bold"><span style="display:inline-block;transform:scaleX(0.62);transform-origin:100% 50%">8 800 707 76 80</span></div>
<div class="a" style="left:-389px;width:600px;text-align:right;top:173.13px;line-height:10px;font-size:9px;white-space:nowrap;color:#2a3a4a"><span style="display:inline-block;transform:scaleX(0.55);transform-origin:100% 50%">Звонок по РФ бесплатно</span></div>
<div class="a" style="left:22px;top:189px;width:218px;height:20px;background:#2db4c2;border-radius:3px 0 0 3px"></div>
<div class="a" style="left:30px;top:193px;width:180px;height:4px;background:#e8f8fa;opacity:0.6"></div>
<div class="a" style="left:34px;top:201px;width:172px;height:4px;background:#e8f8fa;opacity:0.6"></div>
</div>
<div class="a" style="left:1381px;top:73.92px;line-height:14px;font-size:12.5px;white-space:nowrap;font-weight:bold;color:#00ff00;letter-spacing:0.6px">3 - Kaleidoskop TV</div>
<div class="a" style="left:1594px;top:73px;width:25px;height:13px;background:#00ff00;border-radius:3px;font:10px/13px 'Liberation Sans',sans-serif;color:#000;text-align:center;letter-spacing:-0.4px">h264</div>
<div class="a" style="left:1623px;top:72px;width:240px;height:216px;overflow:hidden;background:linear-gradient(160deg,#3c1560 0%,#2a0c4a 35%,#4a1572 60%,#6a1a8a 80%,#3a0c5a 100%)">
<div class="a" style="left:0px;top:150px;width:240px;height:66px;background:linear-gradient(20deg,#7a20a0 0%,rgba(90,20,120,0.3) 50%,transparent 70%)"></div>
<div class="a" style="left:18px;top:31px;width:44px;height:14px;background:#8a1b9e;border-radius:6px 6px 0 0"></div>
<div class="a" style="left:21px;top:34.13px;line-height:10px;font-size:9px;white-space:nowrap;color:#fff">T12065</div>
<div class="a" style="left:18px;top:45px;width:44px;height:42px;background:#f4f4f4"></div>
<div class="a" style="left:20px;top:49.0px;width:38px;height:3px;background:#555;opacity:0.55"></div>
<div class="a" style="left:20px;top:56.5px;width:35px;height:3px;background:#555;opacity:0.55"></div>
<div class="a" style="left:20px;top:64.0px;width:32px;height:3px;background:#555;opacity:0.55"></div>
<div class="a" style="left:20px;top:71.5px;width:38px;height:3px;background:#555;opacity:0.55"></div>
<div class="a" style="left:20px;top:79.0px;width:35px;height:3px;background:#555;opacity:0.55"></div>
<div class="a" style="left:18px;top:89px;width:44px;height:31px;background:#7d1a96"></div>
<div class="a" style="left:30px;top:106.13px;line-height:10px;font-size:9px;white-space:nowrap;color:#fff">6 499₽</div>
<div class="a" style="left:20px;top:93px;width:40px;height:3px;background:#c9a0d8;opacity:0.6"></div>
<div class="a" style="left:18px;top:122px;width:44px;height:32px;background:#efefef"></div>
<div class="a" style="left:21px;top:126px;width:32px;height:3px;background:#555;opacity:0.5"></div>
<div class="a" style="left:21px;top:141px;width:28px;height:3px;background:#555;opacity:0.5"></div>
<div class="a" style="left:40px;top:164px;width:58px;height:22px;background:#8a1b9e"></div>
<div class="a" style="left:20px;top:156px;width:25px;height:37px;background:#7a128e;border-radius:50%;border:1px solid #b060c0"></div>
<div class="a" style="left:29px;top:163px;width:7px;height:22px;border:2px solid #e8d8f0;border-radius:4px;border-left-color:transparent"></div>
<div class="a" style="left:47px;top:168.46px;line-height:11px;font-size:9.5px;white-space:nowrap;color:#fff">8800 505 8358</div>
<div class="a" style="left:47px;top:180px;width:38px;height:3px;background:#e0c0f0;opacity:0.5"></div>
<div class="a" style="left:80px;top:9px;width:78px;height:92px;background:linear-gradient(#2c2a40 0%,#5a2040 35%,#6a6a88 60%,#9090b0 100%)"></div>
<div class="a" style="left:97px;top:32px;width:46px;height:34px;background:radial-gradient(#9098e0 25%,#e8e8f4 50%,#c8c8d8 62%,transparent 72%);border-radius:50%"></div>
<div class="a" style="left:97px;top:66px;width:46px;height:32px;background:radial-gradient(#8890d0 25%,#c8c8e0 50%,transparent 70%);border-radius:50%;opacity:0.85"></div>
<div class="a" style="left:162px;top:9px;width:73px;height:92px;background:linear-gradient(135deg,#1a1030 0%,#5a1838 40%,#b01838 55%,#3a1040 75%,#1a1030 100%)"></div>
<svg class="a" style="left:162px;top:9px" width="73" height="92"><path d="M2 6 Q30 30 38 26 Q55 20 71 10" stroke="#c8c8d0" stroke-width="1.6" fill="none" stroke-dasharray="2,1"/></svg>
<div class="a" style="left:180px;top:26px;width:14px;height:60px;background:linear-gradient(90deg,#d8d8e8,#6a70c0,#d8d8e8);border-radius:3px"></div>
<div class="a" style="left:118px;top:107px;width:90px;height:105px;background:linear-gradient(120deg,#15111c 0%,#2a1020 30%,#901830 50%,#1a0c16 70%,#12101a 100%)"></div>
<div class="a" style="left:143px;top:109px;width:22px;height:103px;background:#1a1a22"></div>
<div class="a" style="left:164px;top:109px;width:24px;height:103px;background:#16161e"></div>
<div class="a" style="left:142px;top:133px;width:14px;height:48px;background:linear-gradient(90deg,#e0e0f0,#5a60c0,#e0e0f0);border-radius:3px"></div>
<div class="a" style="left:180px;top:135px;width:14px;height:48px;background:linear-gradient(90deg,#e0e0f0,#5a60c0,#e0e0f0);border-radius:3px"></div>
</div>
<div class="a" style="left:1624px;top:73.92px;line-height:14px;font-size:12.5px;white-space:nowrap;font-weight:bold;color:#00ff00;letter-spacing:0.6px">5 - Raz TV</div>
<div class="a" style="left:1838px;top:73px;width:25px;height:13px;background:#00ff00;border-radius:3px;font:10px/13px 'Liberation Sans',sans-serif;color:#000;text-align:center;letter-spacing:-0.4px">h264</div>
<div class="a" style="left:1381px;top:290.92px;line-height:14px;font-size:12.5px;white-space:nowrap;font-weight:bold;color:#00ff00;letter-spacing:0.6px">3 - Kaleidoskop TV</div>
<div class="a" style="left:1594px;top:290px;width:25px;height:13px;background:#00ff00;border-radius:3px;font:10px/13px 'Liberation Sans',sans-serif;color:#000;text-align:center;letter-spacing:-0.4px">mpeg</div>
<div class="a" style="left:1624px;top:290.92px;line-height:14px;font-size:12.5px;white-space:nowrap;font-weight:bold;color:#00ff00;letter-spacing:0.6px">5 - Raz TV</div>
<div class="a" style="left:1838px;top:290px;width:25px;height:13px;background:#00ff00;border-radius:3px;font:10px/13px 'Liberation Sans',sans-serif;color:#000;text-align:center;letter-spacing:-0.4px">mpeg</div>
<svg class="a" style="left:0;top:0" width="1897" height="620">
<polyline points="1384.0,312.7 1390.0,313.3 1396.0,313.2 1402.0,312.8 1408.0,313.0 1414.0,313.0 1420.0,313.1 1426.0,313.2 1432.0,312.7 1438.0,312.6 1444.0,313.3 1450.0,312.9 1456.0,313.2 1462.0,312.6 1468.0,313.0 1474.0,313.2 1480.0,312.8 1486.0,313.4 1492.0,313.3 1498.0,312.6 1504.0,312.6 1510.0,313.0 1516.0,313.4 1522.0,312.9 1528.0,312.8 1534.0,312.9 1540.0,312.6 1546.0,312.8 1552.0,313.0 1558.0,313.0 1564.0,312.8 1570.0,312.8 1576.0,312.8 1582.0,313.0 1588.0,312.8 1594.0,312.6 1600.0,313.3" fill="none" stroke="#00e000" stroke-width="1.1" />
<polyline points="1384.0,327.4 1390.0,327.4 1396.0,326.6 1402.0,326.7 1408.0,327.3 1414.0,327.2 1420.0,327.1 1426.0,326.8 1432.0,327.1 1438.0,327.1 1444.0,327.1 1450.0,326.7 1456.0,326.9 1462.0,326.9 1468.0,327.2 1474.0,327.4 1480.0,327.4 1486.0,327.0 1492.0,327.0 1498.0,326.8 1504.0,326.6 1510.0,326.6 1516.0,327.0 1522.0,326.9 1528.0,326.9 1534.0,327.3 1540.0,327.0 1546.0,327.0 1552.0,326.8 1558.0,326.6 1564.0,326.9 1570.0,326.7 1576.0,327.0 1582.0,327.4 1588.0,327.1 1594.0,326.7 1600.0,327.3" fill="none" stroke="#e8e000" stroke-width="1.1" />
<polyline points="1628.0,306.8 1636.0,320.0 1644.7,306.2 1653.4,316.3 1660.3,305.3 1667.9,320.5 1673.3,307.5 1679.3,318.8 1686.6,309.7 1692.5,317.5 1701.2,306.1 1706.8,320.0 1712.3,306.8 1717.9,316.2 1726.3,308.8 1732.2,320.9 1740.7,308.4 1749.5,318.8 1757.2,308.8 1766.0,319.5 1774.9,305.5 1781.1,317.9 1786.7,309.1 1792.0,317.6 1799.4,309.8 1807.1,317.8 1813.4,305.9 1820.3,317.7 1827.2,306.4 1832.4,320.9 1837.5,306.2 1845.9,316.3" fill="none" stroke="#00e000" stroke-width="1.2" stroke-dasharray="1.2,1.8"/>
<polyline points="1628.0,321.8 1636.0,335.0 1644.7,321.2 1653.4,331.3 1660.3,320.3 1667.9,335.5 1673.3,322.5 1679.3,333.8 1686.6,324.7 1692.5,332.5 1701.2,321.1 1706.8,335.0 1712.3,321.8 1717.9,331.2 1726.3,323.8 1732.2,335.9 1740.7,323.4 1749.5,333.8 1757.2,323.8 1766.0,334.5 1774.9,320.5 1781.1,332.9 1786.7,324.1 1792.0,332.6 1799.4,324.8 1807.1,332.8 1813.4,320.9 1820.3,332.7 1827.2,321.4 1832.4,335.9 1837.5,321.2 1845.9,331.3" fill="none" stroke="#e8e000" stroke-width="1.2" stroke-dasharray="1.2,1.8"/>
<polyline points="1384.0,580.9 1389.6,585.8 1394.9,580.5 1401.4,584.5 1408.4,581.5 1415.1,584.5 1420.5,580.7 1428.8,584.7 1434.7,580.3 1443.5,585.6 1450.1,579.5 1455.2,586.2 1461.4,581.3 1466.9,585.0 1475.1,581.2 1482.5,585.7 1489.0,580.4 1494.2,584.5 1500.0,580.2 1506.7,585.1 1514.1,580.6 1520.3,586.1 1528.1,581.1 1535.4,585.5 1543.9,580.1 1550.0,586.5 1555.5,580.7 1563.5,584.7 1570.5,581.5 1578.2,586.0 1585.5,579.8 1591.7,585.9 1599.1,580.4" fill="none" stroke="#00e000" stroke-width="1.2" />
<polyline points="1384.0,593.9 1389.6,598.8 1394.9,593.5 1401.4,597.5 1408.4,594.5 1415.1,597.5 1420.5,593.7 1428.8,597.7 1434.7,593.3 1443.5,598.6 1450.1,592.5 1455.2,599.2 1461.4,594.3 1466.9,598.0 1475.1,594.2 1482.5,598.7 1489.0,593.4 1494.2,597.5 1500.0,593.2 1506.7,598.1 1514.1,593.6 1520.3,599.1 1528.1,594.1 1535.4,598.5 1543.9,593.1 1550.0,599.5 1555.5,593.7 1563.5,597.7 1570.5,594.5 1578.2,599.0 1585.5,592.8 1591.7,598.9 1599.1,593.4" fill="none" stroke="#e8e000" stroke-width="1.2" />
</svg>
<div class="a" style="left:1608px;top:306.92px;line-height:14px;font-size:12.5px;white-space:nowrap;font-weight:bold;color:#00ff00">L</div>
<div class="a" style="left:1608px;top:321.92px;line-height:14px;font-size:12.5px;white-space:nowrap;font-weight:bold;color:#ffff00">R</div>
<div class="a" style="left:1851px;top:306.92px;line-height:14px;font-size:12.5px;white-space:nowrap;font-weight:bold;color:#00ff00">L</div>
<div class="a" style="left:1851px;top:321.92px;line-height:14px;font-size:12.5px;white-space:nowrap;font-weight:bold;color:#ffff00">R</div>
<div class="a" style="left:1380px;top:342px;width:240px;height:216px;overflow:hidden;background:linear-gradient(90deg,#4a4a4a,#6a6a6a 40%,#7a7a7a)">
<div class="a" style="left:78px;top:0px;width:162px;height:125px;background:linear-gradient(100deg,#a81212 0%,#d01c1c 30%,#b81515 60%,#d82020 100%);border-radius:0 0 0 40px"></div>
<div class="a" style="left:0px;top:124px;width:240px;height:92px;background:linear-gradient(#bdbdc2,#d8d8dc 30%,#e4e4e8 70%,#d0d0d4)"></div>
<svg class="a" style="left:0;top:0" width="240" height="216"><g transform="translate(-1380,-342)">
<path d="M1476 349 L1493 347 L1500 455 L1496 475 Z" fill="#f3efd6"/>
<path d="M1499 351 L1517 350 L1505 470 L1497 468 Z" fill="#e6e0bf"/>
<path d="M1478 349 L1491 348 L1492 360 L1479 362Z" fill="#ffffff" opacity="0.6"/>
<ellipse cx="1492" cy="491" rx="22" ry="7" fill="#efe9cf"/>
<path d="M1497 460 L1506 460 L1508 492 L1490 494Z" fill="#ece6c8"/>
<path d="M1481 377 L1486 377 L1487 398 L1482 398Z M1499 380 L1504 380 L1505 401 L1500 401Z" fill="#6a6aa8"/>
<defs><linearGradient id="skin" x1="0" y1="0" x2="1" y2="1"><stop offset="0" stop-color="#f2d3c4"/><stop offset="0.6" stop-color="#e4b9a6"/><stop offset="1" stop-color="#d7a792"/></linearGradient></defs>
<path d="M1620 400 L1585 402 Q1550 404 1528 414 L1506 426 L1488 430 Q1480 436 1486 444 L1500 446 L1489 449 Q1481 456 1488 463 L1502 465 L1492 469 Q1485 476 1492 482 L1506 483 L1500 488 Q1496 496 1506 498 L1620 498 Z" fill="url(#skin)"/>
<path d="M1486 432 L1497 432 L1497 443 L1486 443Z M1487 451 L1498 451 L1498 462 L1487 462Z M1490 470 L1501 470 L1501 481 L1490 481Z" fill="#f6e0d8"/>
<path d="M1525 418 L1530 418 L1533 442 L1528 442Z" fill="#5a5aa0"/>
<path d="M1538 438 L1543 438 L1545 462 L1540 462Z" fill="#5a5aa0"/>
</g></svg>
<div class="a" style="left:18px;top:31px;width:44px;height:14px;background:#8a1b9e;border-radius:6px 6px 0 0"></div>
<div class="a" style="left:21px;top:34.13px;line-height:10px;font-size:9px;white-space:nowrap;color:#fff">T12065</div>
<div class="a" style="left:18px;top:45px;width:44px;height:42px;background:#f4f4f4"></div>
<div class="a" style="left:20px;top:49.0px;width:38px;height:3px;background:#555;opacity:0.55"></div>
<div class="a" style="left:20px;top:56.5px;width:35px;height:3px;background:#555;opacity:0.55"></div>
<div class="a" style="left:20px;top:64.0px;width:32px;height:3px;background:#555;opacity:0.55"></div>
<div class="a" style="left:20px;top:71.5px;width:38px;height:3px;background:#555;opacity:0.55"></div>
<div class="a" style="left:20px;top:79.0px;width:35px;height:3px;background:#555;opacity:0.55"></div>
<div class="a" style="left:18px;top:89px;width:44px;height:31px;background:#7d1a96"></div>
<div class="a" style="left:30px;top:106.13px;line-height:10px;font-size:9px;white-space:nowrap;color:#fff">6 499₽</div>
<div class="a" style="left:20px;top:93px;width:40px;height:3px;background:#c9a0d8;opacity:0.6"></div>
<div class="a" style="left:18px;top:122px;width:44px;height:32px;background:#efefef"></div>
<div class="a" style="left:21px;top:126px;width:32px;height:3px;background:#555;opacity:0.5"></div>
<div class="a" style="left:21px;top:141px;width:28px;height:3px;background:#555;opacity:0.5"></div>
<div class="a" style="left:39px;top:164px;width:59px;height:22px;background:#8a1b9e"></div>
<div class="a" style="left:19px;top:156px;width:25px;height:37px;background:#7a128e;border-radius:50%;border:1px solid #b060c0"></div>
<div class="a" style="left:28px;top:163px;width:7px;height:22px;border:2px solid #e8d8f0;border-radius:4px;border-left-color:transparent"></div>
<div class="a" style="left:46px;top:168.46px;line-height:11px;font-size:9.5px;white-space:nowrap;color:#fff">8800 505 8355</div>
<div class="a" style="left:46px;top:180px;width:38px;height:3px;background:#e0c0f0;opacity:0.5"></div>
</div>
<div class="a" style="left:1381px;top:344.92px;line-height:14px;font-size:12.5px;white-space:nowrap;font-weight:bold;color:#00ff00;letter-spacing:0.6px">4 - Pes i ko</div>
<div class="a" style="left:1595px;top:344px;width:25px;height:13px;background:#00ff00;border-radius:3px;font:10px/13px 'Liberation Sans',sans-serif;color:#000;text-align:center;letter-spacing:-0.4px">h264</div>
<div class="a" style="left:1381px;top:560.92px;line-height:14px;font-size:12.5px;white-space:nowrap;font-weight:bold;color:#00ff00;letter-spacing:0.6px">4 - Pes i ko</div>
<div class="a" style="left:1595px;top:561px;width:25px;height:13px;background:#00ff00;border-radius:3px;font:10px/13px 'Liberation Sans',sans-serif;color:#000;text-align:center;letter-spacing:-0.4px">mpeg</div>
<div class="a" style="left:1608px;top:578.92px;line-height:14px;font-size:12.5px;white-space:nowrap;font-weight:bold;color:#00ff00">L</div>
<div class="a" style="left:1608px;top:592.92px;line-height:14px;font-size:12.5px;white-space:nowrap;font-weight:bold;color:#ffff00">R</div>
</body></html>
